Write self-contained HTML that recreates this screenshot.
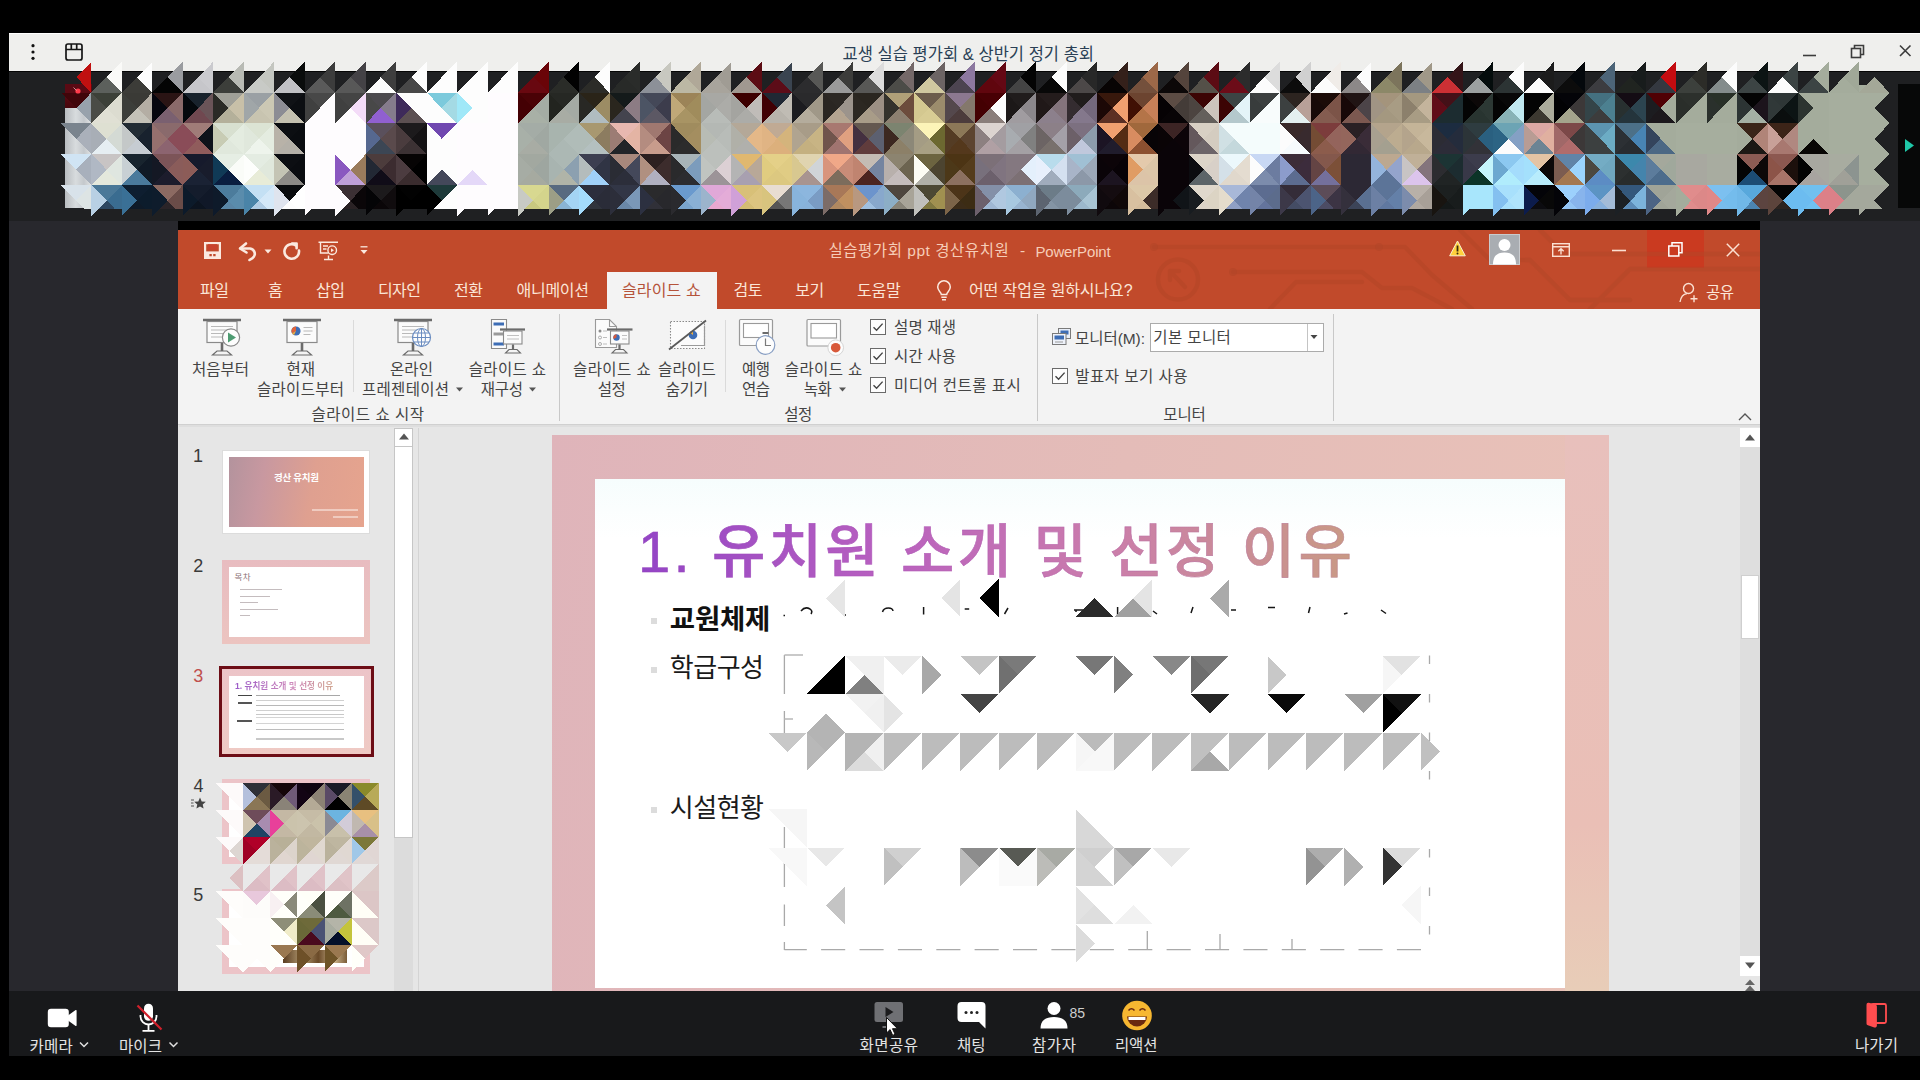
<!DOCTYPE html>
<html lang="ko"><head><meta charset="utf-8"><title>교생 실습 평가회 &amp; 상반기 정기 총회</title>
<style>
html,body{margin:0;padding:0;background:#000;}
body{width:1920px;height:1080px;position:relative;overflow:hidden;font-family:'Liberation Sans','Noto Sans CJK KR',sans-serif;}
.a{position:absolute;}
.t{position:absolute;white-space:nowrap;}
.mos{position:absolute;left:0;top:0;}
svg{position:absolute;overflow:visible;}
.cb{position:absolute;width:14px;height:14px;border:1px solid #6a6a6a;background:#fdfdfd;}
.vs{position:absolute;width:1px;background:#d2d2d2;}
</style></head><body>

<div class="a" style="left:9px;top:33px;width:1911px;height:38px;background:#efefed;border-top:1px solid #fff;box-sizing:border-box;"></div>
<div class="a" style="left:9px;top:71px;width:1911px;height:150px;background:#1f2022;border-top:1px solid #050505;box-sizing:border-box;"></div>
<div class="a" style="left:65px;top:84px;width:27px;height:24px;background:linear-gradient(180deg,#5a0a14 0,#5a0a14 40%,#46060c 100%);"></div>
<div class="a" style="left:65px;top:108px;width:27px;height:100px;background:linear-gradient(90deg,#b8bcc0,#d8dcde 40%,#c4c8cc 70%,#e4e6e6);"></div>
<div class="a" style="left:1859px;top:85px;width:13px;height:123px;background:#a6ae9e;"></div>
<div class="a" style="left:1898px;top:84px;width:22px;height:124px;background:#070808;"></div>
<div class="a" style="left:9px;top:221px;width:1911px;height:770px;background:#28282d;"></div>
<div class="a" style="left:178px;top:221px;width:1582px;height:770px;background:#000;"></div>
<div class="a" style="left:9px;top:991px;width:1911px;height:65px;background:#18191b;"></div>
<!-- powerpoint -->
<div class="a" style="left:178px;top:230px;width:1582px;height:79px;background:#c14a2b;"></div>
<div class="a" style="left:1647px;top:230px;width:57px;height:38px;background:#ca3a20;"></div>
<div class="a" style="left:607px;top:272px;width:110px;height:37px;background:#f3f3f3;"></div>
<div class="a" style="left:178px;top:309px;width:1582px;height:116px;background:#f3f3f3;border-bottom:1px solid #d0d0d0;box-sizing:border-box;"></div>
<div class="a" style="left:178px;top:425px;width:1582px;height:566px;background:#e6e6e6;"></div>
<svg style="left:1120px;top:230px;overflow:hidden" width="640" height="79" fill="none" stroke-linecap="round" stroke-linejoin="round"><g stroke="#b24527" stroke-width="4.500" opacity=".5"><path d="M34 17H285l27 28l40 34"/><path d="M113 42H242l20 16h30l40 21"/><path d="M150 79l26-27H242"/><circle cx="58" cy="49.600" r="20"/><path d="M50 41l15 16M50 41h9M50 41v9"/><path d="M340 0l30 30h40l40 40h60M470 79l40-40h130M420 0l24 24h196"/></g><g fill="#b24527" opacity=".5"><circle cx="34" cy="17" r="4"/><circle cx="113" cy="42" r="4"/><circle cx="259" cy="17" r="4"/></g></svg><div class="vs" style="left:353px;top:320px;height:72px;background:#dadada;"></div><div class="vs" style="left:559px;top:314px;height:107px;background:#c8c8c8;"></div><div class="vs" style="left:725px;top:320px;height:72px;background:#dadada;"></div><div class="vs" style="left:1037px;top:314px;height:107px;background:#c8c8c8;"></div><div class="vs" style="left:1333px;top:314px;height:107px;background:#c8c8c8;"></div><div class="cb" style="left:870px;top:319px;"></div><svg style="left:870px;top:319px" width="16" height="16"><path d="M3.5 8.2L6.6 11.3L12.6 4.6" fill="none" stroke="#444" stroke-width="1.4"/></svg><div class="cb" style="left:870px;top:348px;"></div><svg style="left:870px;top:348px" width="16" height="16"><path d="M3.5 8.2L6.6 11.3L12.6 4.6" fill="none" stroke="#444" stroke-width="1.4"/></svg><div class="cb" style="left:870px;top:377px;"></div><svg style="left:870px;top:377px" width="16" height="16"><path d="M3.5 8.2L6.6 11.3L12.6 4.6" fill="none" stroke="#444" stroke-width="1.4"/></svg><div class="cb" style="left:1052px;top:368px;"></div><svg style="left:1052px;top:368px" width="16" height="16"><path d="M3.5 8.2L6.6 11.3L12.6 4.6" fill="none" stroke="#444" stroke-width="1.4"/></svg><div class="a" style="left:1150px;top:323px;width:172px;height:27px;background:#fff;border:1px solid #ababab;"></div><div class="a" style="left:1307px;top:324px;width:1px;height:27px;background:#c4c4c4;"></div><svg style="left:1310px;top:334px" width="8" height="6"><path d="M0.5 1h7L4 5z" fill="#444"/></svg><svg style="left:456px;top:387px" width="7" height="5"><path d="M0 0.5h7L3.5 4.5z" fill="#555"/></svg><svg style="left:529px;top:387px" width="7" height="5"><path d="M0 0.5h7L3.5 4.5z" fill="#555"/></svg><svg style="left:839px;top:387px" width="7" height="5"><path d="M0 0.5h7L3.5 4.5z" fill="#555"/></svg><div class="a" style="left:394px;top:428px;width:19px;height:410px;background:#fff;border:1px solid #c6c6c6;box-sizing:border-box;"></div><div class="a" style="left:394px;top:446px;width:19px;height:1px;background:#c6c6c6;"></div><div class="a" style="left:394px;top:838px;width:19px;height:153px;background:#dcdcdc;"></div><svg style="left:399px;top:433px" width="10" height="7"><path d="M0 6.5L5 0.5L10 6.5z" fill="#555"/></svg><div class="a" style="left:418px;top:428px;width:1px;height:563px;background:#d4d4d4;"></div><div class="a" style="left:179px;top:425px;width:1581px;height:2px;background:#dedede;"></div><div class="a" style="left:1740px;top:428px;width:20px;height:548px;background:#dedede;"></div><div class="a" style="left:1740px;top:428px;width:20px;height:19px;background:#fff;"></div><div class="a" style="left:1740px;top:956px;width:20px;height:20px;background:#fff;"></div><div class="a" style="left:1741px;top:575px;width:18px;height:64px;background:#fff;border:1px solid #cfcfcf;box-sizing:border-box;"></div><svg style="left:1745px;top:434px" width="10" height="7"><path d="M0 6.5L5 0.5L10 6.5z" fill="#555"/></svg><svg style="left:1745px;top:962px" width="10" height="7"><path d="M0 0.5L5 6.5L10 0.5z" fill="#555"/></svg><svg style="left:1745px;top:979px" width="10" height="12"><path d="M0 6L5 0.5L10 6zM0 12L5 6.5L10 12z" fill="#666"/></svg><svg style="left:1738px;top:412px" width="14" height="9"><path d="M1 8L7 2L13 8" fill="none" stroke="#555" stroke-width="1.4"/></svg><div class="a" style="left:222px;top:450px;width:148px;height:84px;background:#fff;border:1px solid #dcdcdc;box-sizing:border-box;"></div><div class="a" style="left:229px;top:457px;width:135px;height:70px;background:linear-gradient(100deg,#b3939d 0%,#c898a0 25%,#dfa090 60%,#e6a48e 100%);"></div><div class="a" style="left:312px;top:509px;width:46px;height:2px;background:#f3d6cc;opacity:.8"></div><div class="a" style="left:333px;top:516px;width:25px;height:2px;background:#f3d6cc;opacity:.8"></div><div class="a" style="left:222px;top:560px;width:148px;height:84px;background:linear-gradient(180deg,#e8bcc0,#ecc4c0);"></div><div class="a" style="left:229px;top:567px;width:135px;height:70px;background:#fff;"></div><div class="a" style="left:240px;top:589px;width:42px;height:1.3px;background:#c4bcbe;"></div><div class="a" style="left:240px;top:596px;width:30px;height:1.3px;background:#c4bcbe;"></div><div class="a" style="left:240px;top:602px;width:18px;height:1.3px;background:#c4bcbe;"></div><div class="a" style="left:240px;top:609px;width:38px;height:1.3px;background:#c4bcbe;"></div><div class="a" style="left:240px;top:615px;width:10px;height:1.3px;background:#c4bcbe;"></div><div class="a" style="left:219px;top:666px;width:155px;height:91px;background:#6d0d16;"></div><div class="a" style="left:222px;top:669px;width:149px;height:85px;background:linear-gradient(180deg,#ecc4c8,#efcac4);"></div><div class="a" style="left:229px;top:676px;width:135px;height:72px;background:#fff;"></div><div class="t" style="left:235px;top:681px;font-size:8.6px;line-height:10px;font-weight:700;opacity:.85;background:linear-gradient(90deg,#8a3fc0,#c878b0 60%,#c9967f);-webkit-background-clip:text;background-clip:text;color:transparent;">1. 유치원 소개 및 선정 이유</div><div class="a" style="left:238px;top:694.7px;width:14px;height:1.6px;background:#444;"></div><div class="a" style="left:256px;top:694.8px;width:84px;height:1.4px;background:#a8a8a8;"></div><div class="a" style="left:238px;top:702.2px;width:14px;height:1.6px;background:#555;"></div><div class="a" style="left:237px;top:720.2px;width:15px;height:1.6px;background:#555;"></div><div class="a" style="left:256px;top:700.0px;width:88px;height:1px;background:#d0d0d0;"></div><div class="a" style="left:256px;top:704.9px;width:88px;height:1.2px;background:#b8b8b8;"></div><div class="a" style="left:256px;top:709.5px;width:88px;height:1px;background:#d0d0d0;"></div><div class="a" style="left:256px;top:713.5px;width:88px;height:1px;background:#c8c8c8;"></div><div class="a" style="left:256px;top:717.0px;width:88px;height:1px;background:#d4d4d4;"></div><div class="a" style="left:256px;top:722.5px;width:88px;height:1px;background:#d4d4d4;"></div><div class="a" style="left:256px;top:728.9px;width:88px;height:1.2px;background:#bdbdbd;"></div><div class="a" style="left:256px;top:738.4px;width:88px;height:1.2px;background:#c8c8c8;"></div><div class="a" style="left:222px;top:779px;width:148px;height:85px;background:#ecc4c8;"></div><div class="a" style="left:229px;top:786px;width:135px;height:71px;background:#fff;"></div><div class="a" style="left:222px;top:889px;width:148px;height:85px;background:#ecc4c8;"></div><div class="a" style="left:229px;top:896px;width:135px;height:71px;background:#fff;"></div><div class="a" style="left:283px;top:950px;width:64px;height:13px;background:linear-gradient(90deg,#5a3c20,#b09870 30%,#6a4a28 55%,#cbb48c 80%,#7a5c38);"></div><svg style="left:191px;top:797px" width="15" height="12"><path d="M9 0.5L10.7 4.4L14.8 4.8L11.7 7.5L12.6 11.6L9 9.5L5.4 11.6L6.3 7.5L3.2 4.8L7.3 4.4z" fill="#444"/><path d="M0 3h3M0 6h2.5M0 9h3" stroke="#555" stroke-width="1"/></svg><div class="a" style="left:552px;top:435px;width:1057px;height:556px;background:linear-gradient(100deg,#dfb4ba 0%,#e4bcb8 50%,#e9c2b8 100%);"></div><div class="a" style="left:1565px;top:435px;width:44px;height:556px;background:linear-gradient(180deg,#e8c0bc 0%,#eabfb6 70%,#e8cdb8 100%);"></div><div class="a" style="left:595px;top:479px;width:970px;height:509px;background:linear-gradient(180deg,#f6fdfd 0,#fff 60px);"></div><div class="t" id="s1" style="left:638px;top:523.4px;font-size:58px;line-height:58px;letter-spacing:3.2px;font-weight:500;background:linear-gradient(90deg,#9344c6 0%,#b961bf 35%,#cb7dab 65%,#c99a84 100%);-webkit-background-clip:text;background-clip:text;color:transparent;-webkit-text-stroke:0.6px rgba(150,70,170,0.25);">1. 유치원 소개 및 선정 이유</div><div class="a" style="left:651px;top:618px;width:6px;height:6px;background:#dcdcdc;"></div><div class="a" style="left:651px;top:667px;width:6px;height:6px;background:#dcdcdc;"></div><div class="a" style="left:651px;top:807px;width:6px;height:6px;background:#dcdcdc;"></div><svg style="left:0;top:0" width="1920" height="1080" fill="none" stroke="#a9a9a9" stroke-width="1.3"><path d="M784.4 949.7H806.8M821.1 949.7H845.2M859.5 949.7H883.6M897.9 949.7H922.0M936.3 949.7H960.4M974.6 949.7H998.7M1013.0 949.7H1037.1M1051.4 949.7H1075.5M1089.8 949.7H1113.9M1128.2 949.7H1152.3M1166.6 949.7H1190.7M1205.0 949.7H1229.1M1243.4 949.7H1267.5M1281.8 949.7H1305.9M1320.2 949.7H1344.3M1358.5 949.7H1382.6M1396.9 949.7H1421.0"/><path d="M1429.5 655.6v8.5M1429.5 694.0v8.5M1429.5 732.5v8.5M1429.5 771.0v8.5M1429.5 849.0v8.5M1429.5 887.5v8.5M1429.5 926.0v8.5M784.4 827V887M784.4 904.5V926M784.4 942V950M784.4 655V694M784.4 711V733M1147.3 931V949M1220 934V949M1292 939V949"/><path d="M784.4 655H803M784.4 719H793" stroke="#b8b8b8"/></svg><svg style="left:0;top:0" width="1920" height="1080" fill="none" stroke="#161616" stroke-width="1.5"><path d="M783.5 615.5h1.5M801 611q4-5 9-2q3 2 1 5M844.500 615h1.500M882.500 612q1-4 6-4q4 0 4.500 3M923.600 607v7.500M964.700 609h4.500M1008 608l-3.500 6M1074 610h10M1076 610v2M1117.600 607v10M1153 611l4 3M1193 607l-2 6M1231 610h5M1268 607.500h7M1310 607l-1.500 6M1344 614l3.500-1M1381 610l5 3.500"/></svg><svg class="mos" width="1920" height="1080" viewBox="0 0 1920 1080" shape-rendering="crispEdges"><path fill="#c01010" d="M91.4 61.7L91.4 92.6L76.2 77.1z"/>
<path fill="#fafaf8" d="M121.9 61.7L121.9 92.6L106.7 77.1z"/>
<path fill="#5c605c" d="M121.9 92.6L91.4 92.6L106.7 77.1z"/>
<path fill="#fdfdfd" d="M152.4 61.7L152.4 92.6L137.1 77.1z"/>
<path fill="#3c3c38" d="M152.4 92.6L121.9 92.6L137.1 77.1z"/>
<path fill="#9a9ca0" d="M182.9 61.7L182.9 92.6L167.6 77.1z"/>
<path fill="#040404" d="M182.9 92.6L152.4 92.6L167.6 77.1z"/>
<path fill="#cacace" d="M213.3 61.7L213.3 92.6L198.1 77.1z"/>
<path fill="#c6c6ca" d="M213.3 92.6L182.9 92.6L198.1 77.1z"/>
<path fill="#b8bab4" d="M243.8 61.7L243.8 92.6L228.6 77.1z"/>
<path fill="#3c3e3a" d="M243.8 92.6L213.3 92.6L228.6 77.1z"/>
<path fill="#c4c6c0" d="M274.3 61.7L274.3 92.6L259.0 77.1z"/>
<path fill="#c8cac6" d="M274.3 92.6L243.8 92.6L259.0 77.1z"/>
<path fill="#0a0c0c" d="M304.8 61.7L304.8 92.6L289.5 77.1z"/>
<path fill="#c0c0c4" d="M304.8 92.6L274.3 92.6L289.5 77.1z"/>
<path fill="#3c3c3c" d="M335.2 61.7L335.2 92.6L320.0 77.1z"/>
<path fill="#5a5a5a" d="M335.2 92.6L304.8 92.6L320.0 77.1z"/>
<path fill="#444246" d="M365.7 61.7L365.7 92.6L350.5 77.1z"/>
<path fill="#585858" d="M365.7 92.6L335.2 92.6L350.5 77.1z"/>
<path fill="#3e3e3e" d="M396.2 61.7L396.2 92.6L380.9 77.1z"/>
<path fill="#fcfcfc" d="M396.2 92.6L365.7 92.6L380.9 77.1z"/>
<path fill="#fdfdfd" d="M426.7 61.7L426.7 92.6L411.4 77.1z"/>
<path fill="#484848" d="M426.7 92.6L396.2 92.6L411.4 77.1z"/>
<path fill="#fdfdfd" d="M457.1 61.7L457.1 92.6L441.9 77.1z"/>
<path fill="#fdfdfd" d="M457.1 92.6L426.7 92.6L441.9 77.1z"/>
<path fill="#fdfdfd" d="M487.6 61.7L487.6 92.6L472.4 77.1z"/>
<path fill="#fdfdfd" d="M487.6 92.6L457.1 92.6L472.4 77.1z"/>
<path fill="#fdfdfd" d="M518.1 61.7L518.1 92.6L502.9 77.1z"/>
<path fill="#fdfdfd" d="M518.1 92.6L487.6 92.6L502.9 77.1z"/>
<path fill="#6a0408" d="M548.6 61.7L548.6 92.6L533.3 77.1z"/>
<path fill="#680810" d="M548.6 92.6L518.1 92.6L533.3 77.1z"/>
<path fill="#020202" d="M579.0 61.7L579.0 92.6L563.8 77.1z"/>
<path fill="#2a2c28" d="M579.0 92.6L548.6 92.6L563.8 77.1z"/>
<path fill="#fdfdfd" d="M609.5 61.7L609.5 92.6L594.3 77.1z"/>
<path fill="#2c2c28" d="M609.5 92.6L579.0 92.6L594.3 77.1z"/>
<path fill="#2a2c2a" d="M640.0 61.7L640.0 92.6L624.8 77.1z"/>
<path fill="#282a28" d="M640.0 92.6L609.5 92.6L624.8 77.1z"/>
<path fill="#c8c8c0" d="M670.5 61.7L670.5 92.6L655.2 77.1z"/>
<path fill="#8c9098" d="M670.5 92.6L640.0 92.6L655.2 77.1z"/>
<path fill="#b0a898" d="M700.9 61.7L700.9 92.6L685.7 77.1z"/>
<path fill="#bcb8a4" d="M700.9 92.6L670.5 92.6L685.7 77.1z"/>
<path fill="#a09c94" d="M731.4 61.7L731.4 92.6L716.2 77.1z"/>
<path fill="#a8a49c" d="M731.4 92.6L700.9 92.6L716.2 77.1z"/>
<path fill="#5c0c14" d="M761.9 61.7L761.9 92.6L746.7 77.1z"/>
<path fill="#a09890" d="M761.9 92.6L731.4 92.6L746.7 77.1z"/>
<path fill="#3a4450" d="M792.4 61.7L792.4 92.6L777.1 77.1z"/>
<path fill="#5c0c18" d="M792.4 92.6L761.9 92.6L777.1 77.1z"/>
<path fill="#585856" d="M822.9 61.7L822.9 92.6L807.6 77.1z"/>
<path fill="#2c2c2e" d="M822.9 92.6L792.4 92.6L807.6 77.1z"/>
<path fill="#3c3c3a" d="M853.3 61.7L853.3 92.6L838.1 77.1z"/>
<path fill="#9a9a9a" d="M853.3 92.6L822.9 92.6L838.1 77.1z"/>
<path fill="#dcdcdc" d="M883.8 61.7L883.8 92.6L868.6 77.1z"/>
<path fill="#585856" d="M883.8 92.6L853.3 92.6L868.6 77.1z"/>
<path fill="#746868" d="M914.3 61.7L914.3 92.6L899.0 77.1z"/>
<path fill="#4c4c48" d="M914.3 92.6L883.8 92.6L899.0 77.1z"/>
<path fill="#6c6464" d="M944.8 61.7L944.8 92.6L929.5 77.1z"/>
<path fill="#d0c8a0" d="M944.8 92.6L914.3 92.6L929.5 77.1z"/>
<path fill="#8c78a0" d="M975.2 61.7L975.2 92.6L960.0 77.1z"/>
<path fill="#4c4450" d="M975.2 92.6L944.8 92.6L960.0 77.1z"/>
<path fill="#640814" d="M1005.7 61.7L1005.7 92.6L990.5 77.1z"/>
<path fill="#60060e" d="M1005.7 92.6L975.2 92.6L990.5 77.1z"/>
<path fill="#040404" d="M1036.2 61.7L1036.2 92.6L1020.9 77.1z"/>
<path fill="#444444" d="M1036.2 92.6L1005.7 92.6L1020.9 77.1z"/>
<path fill="#fcfcfc" d="M1066.7 61.7L1066.7 92.6L1051.4 77.1z"/>
<path fill="#080808" d="M1066.7 92.6L1036.2 92.6L1051.4 77.1z"/>
<path fill="#282828" d="M1097.1 61.7L1097.1 92.6L1081.9 77.1z"/>
<path fill="#4c4848" d="M1097.1 92.6L1066.7 92.6L1081.9 77.1z"/>
<path fill="#34201a" d="M1127.6 61.7L1127.6 92.6L1112.4 77.1z"/>
<path fill="#080404" d="M1127.6 92.6L1097.1 92.6L1112.4 77.1z"/>
<path fill="#9c6848" d="M1158.1 61.7L1158.1 92.6L1142.9 77.1z"/>
<path fill="#74503c" d="M1158.1 92.6L1127.6 92.6L1142.9 77.1z"/>
<path fill="#54443c" d="M1188.6 61.7L1188.6 92.6L1173.3 77.1z"/>
<path fill="#0c0808" d="M1188.6 92.6L1158.1 92.6L1173.3 77.1z"/>
<path fill="#5c0c14" d="M1219.0 61.7L1219.0 92.6L1203.8 77.1z"/>
<path fill="#545048" d="M1219.0 92.6L1188.6 92.6L1203.8 77.1z"/>
<path fill="#2c2c2c" d="M1249.5 61.7L1249.5 92.6L1234.3 77.1z"/>
<path fill="#6c0c18" d="M1249.5 92.6L1219.0 92.6L1234.3 77.1z"/>
<path fill="#dcdcdc" d="M1280.0 61.7L1280.0 92.6L1264.8 77.1z"/>
<path fill="#fcfcfc" d="M1280.0 92.6L1249.5 92.6L1264.8 77.1z"/>
<path fill="#d0d0d0" d="M1310.5 61.7L1310.5 92.6L1295.2 77.1z"/>
<path fill="#0c0c0c" d="M1310.5 92.6L1280.0 92.6L1295.2 77.1z"/>
<path fill="#f0ece8" d="M1340.9 61.7L1340.9 92.6L1325.7 77.1z"/>
<path fill="#fcfcfc" d="M1340.9 92.6L1310.5 92.6L1325.7 77.1z"/>
<path fill="#fcfcfc" d="M1371.4 61.7L1371.4 92.6L1356.2 77.1z"/>
<path fill="#8c8888" d="M1371.4 92.6L1340.9 92.6L1356.2 77.1z"/>
<path fill="#7c745c" d="M1401.9 61.7L1401.9 92.6L1386.7 77.1z"/>
<path fill="#8c8868" d="M1401.9 92.6L1371.4 92.6L1386.7 77.1z"/>
<path fill="#a09888" d="M1432.4 61.7L1432.4 92.6L1417.1 77.1z"/>
<path fill="#7c8084" d="M1432.4 92.6L1401.9 92.6L1417.1 77.1z"/>
<path fill="#341418" d="M1462.8 61.7L1462.8 92.6L1447.6 77.1z"/>
<path fill="#cc3034" d="M1462.8 92.6L1432.4 92.6L1447.6 77.1z"/>
<path fill="#040c0c" d="M1493.3 61.7L1493.3 92.6L1478.1 77.1z"/>
<path fill="#9ca0a0" d="M1493.3 92.6L1462.8 92.6L1478.1 77.1z"/>
<path fill="#fcfcfc" d="M1523.8 61.7L1523.8 92.6L1508.6 77.1z"/>
<path fill="#2c3434" d="M1523.8 92.6L1493.3 92.6L1508.6 77.1z"/>
<path fill="#1c1c1c" d="M1554.3 61.7L1554.3 92.6L1539.0 77.1z"/>
<path fill="#fcfcfc" d="M1554.3 92.6L1523.8 92.6L1539.0 77.1z"/>
<path fill="#04080c" d="M1584.8 61.7L1584.8 92.6L1569.5 77.1z"/>
<path fill="#0c0c0c" d="M1584.8 92.6L1554.3 92.6L1569.5 77.1z"/>
<path fill="#4c6478" d="M1615.2 61.7L1615.2 92.6L1600.0 77.1z"/>
<path fill="#3c3c40" d="M1615.2 92.6L1584.8 92.6L1600.0 77.1z"/>
<path fill="#181c1c" d="M1645.7 61.7L1645.7 92.6L1630.5 77.1z"/>
<path fill="#202420" d="M1645.7 92.6L1615.2 92.6L1630.5 77.1z"/>
<path fill="#c40c10" d="M1676.2 61.7L1676.2 92.6L1660.9 77.1z"/>
<path fill="#343840" d="M1676.2 92.6L1645.7 92.6L1660.9 77.1z"/>
<path fill="#2c2c28" d="M1706.7 61.7L1706.7 92.6L1691.4 77.1z"/>
<path fill="#3c403c" d="M1706.7 92.6L1676.2 92.6L1691.4 77.1z"/>
<path fill="#fcfcfc" d="M1737.1 61.7L1737.1 92.6L1721.9 77.1z"/>
<path fill="#848c8c" d="M1737.1 92.6L1706.7 92.6L1721.9 77.1z"/>
<path fill="#0c1414" d="M1767.6 61.7L1767.6 92.6L1752.4 77.1z"/>
<path fill="#3c4444" d="M1767.6 92.6L1737.1 92.6L1752.4 77.1z"/>
<path fill="#3c4444" d="M1798.1 61.7L1798.1 92.6L1782.8 77.1z"/>
<path fill="#fcfcfc" d="M1798.1 92.6L1767.6 92.6L1782.8 77.1z"/>
<path fill="#a4ac9c" d="M1828.6 61.7L1828.6 92.6L1813.3 77.1z"/>
<path fill="#3c4444" d="M1828.6 92.6L1798.1 92.6L1813.3 77.1z"/>
<path fill="#a0a898" d="M1859.0 61.7L1859.0 92.6L1843.8 77.1z"/>
<path fill="#a4ac9c" d="M1859.0 92.6L1828.6 92.6L1843.8 77.1z"/>
<path fill="#a4a898" d="M1889.5 92.6L1859.0 92.6L1874.3 77.1z"/>
<path fill="#40050a" d="M61.0 92.6L91.4 92.6L76.2 108.0z"/>
<path fill="#98a2ac" d="M91.4 92.6L91.4 123.4L76.2 108.0z"/>
<path fill="#3c4038" d="M91.4 92.6L121.9 92.6L106.7 108.0z"/>
<path fill="#dcdcd0" d="M121.9 92.6L121.9 123.4L106.7 108.0z"/>
<path fill="#e0e0d4" d="M121.9 123.4L91.4 123.4L106.7 108.0z"/>
<path fill="#4a4c46" d="M91.4 123.4L91.4 92.6L106.7 108.0z"/>
<path fill="#3a3a36" d="M121.9 92.6L152.4 92.6L137.1 108.0z"/>
<path fill="#b4aea4" d="M152.4 92.6L152.4 123.4L137.1 108.0z"/>
<path fill="#c4c2b8" d="M152.4 123.4L121.9 123.4L137.1 108.0z"/>
<path fill="#3c3e3a" d="M121.9 123.4L121.9 92.6L137.1 108.0z"/>
<path fill="#2a1414" d="M152.4 92.6L182.9 92.6L167.6 108.0z"/>
<path fill="#8a6a6a" d="M182.9 92.6L182.9 123.4L167.6 108.0z"/>
<path fill="#7a6070" d="M182.9 123.4L152.4 123.4L167.6 108.0z"/>
<path fill="#06060e" d="M152.4 123.4L152.4 92.6L167.6 108.0z"/>
<path fill="#18222c" d="M182.9 92.6L213.3 92.6L198.1 108.0z"/>
<path fill="#6a5458" d="M213.3 92.6L213.3 123.4L198.1 108.0z"/>
<path fill="#704850" d="M213.3 123.4L182.9 123.4L198.1 108.0z"/>
<path fill="#04080c" d="M182.9 123.4L182.9 92.6L198.1 108.0z"/>
<path fill="#a0a098" d="M213.3 92.6L243.8 92.6L228.6 108.0z"/>
<path fill="#c8c0a8" d="M243.8 92.6L243.8 123.4L228.6 108.0z"/>
<path fill="#b4b09a" d="M243.8 123.4L213.3 123.4L228.6 108.0z"/>
<path fill="#2a2a26" d="M213.3 123.4L213.3 92.6L228.6 108.0z"/>
<path fill="#9aa0a4" d="M243.8 92.6L274.3 92.6L259.0 108.0z"/>
<path fill="#ccc8b4" d="M274.3 92.6L274.3 123.4L259.0 108.0z"/>
<path fill="#c8c4b0" d="M274.3 123.4L243.8 123.4L259.0 108.0z"/>
<path fill="#a0a6a8" d="M243.8 123.4L243.8 92.6L259.0 108.0z"/>
<path fill="#101216" d="M274.3 92.6L304.8 92.6L289.5 108.0z"/>
<path fill="#0c0e12" d="M304.8 92.6L304.8 123.4L289.5 108.0z"/>
<path fill="#c4c0b0" d="M304.8 123.4L274.3 123.4L289.5 108.0z"/>
<path fill="#8c8c94" d="M274.3 123.4L274.3 92.6L289.5 108.0z"/>
<path fill="#484848" d="M304.8 92.6L335.2 92.6L320.0 108.0z"/>
<path fill="#fefcfe" d="M335.2 92.6L335.2 123.4L320.0 108.0z"/>
<path fill="#fefcfe" d="M335.2 123.4L304.8 123.4L320.0 108.0z"/>
<path fill="#404040" d="M304.8 123.4L304.8 92.6L320.0 108.0z"/>
<path fill="#444444" d="M335.2 92.6L365.7 92.6L350.5 108.0z"/>
<path fill="#f4dcf8" d="M365.7 92.6L365.7 123.4L350.5 108.0z"/>
<path fill="#fefcfe" d="M365.7 123.4L335.2 123.4L350.5 108.0z"/>
<path fill="#404040" d="M335.2 123.4L335.2 92.6L350.5 108.0z"/>
<path fill="#4c4a4e" d="M365.7 92.6L396.2 92.6L380.9 108.0z"/>
<path fill="#857c8c" d="M396.2 92.6L396.2 123.4L380.9 108.0z"/>
<path fill="#9060d0" d="M396.2 123.4L365.7 123.4L380.9 108.0z"/>
<path fill="#484848" d="M365.7 123.4L365.7 92.6L380.9 108.0z"/>
<path fill="#fdfdfd" d="M396.2 92.6L426.7 92.6L411.4 108.0z"/>
<path fill="#fdfdfd" d="M426.7 92.6L426.7 123.4L411.4 108.0z"/>
<path fill="#5c5052" d="M426.7 123.4L396.2 123.4L411.4 108.0z"/>
<path fill="#3e2a5a" d="M396.2 123.4L396.2 92.6L411.4 108.0z"/>
<path fill="#7ccadc" d="M426.7 92.6L457.1 92.6L441.9 108.0z"/>
<path fill="#a4dae4" d="M457.1 92.6L457.1 123.4L441.9 108.0z"/>
<path fill="#fdfdfd" d="M457.1 123.4L426.7 123.4L441.9 108.0z"/>
<path fill="#fdfdfd" d="M426.7 123.4L426.7 92.6L441.9 108.0z"/>
<path fill="#fdfdfd" d="M457.1 92.6L487.6 92.6L472.4 108.0z"/>
<path fill="#fdfdfd" d="M487.6 92.6L487.6 123.4L472.4 108.0z"/>
<path fill="#fdfdfd" d="M487.6 123.4L457.1 123.4L472.4 108.0z"/>
<path fill="#a0e8f8" d="M457.1 123.4L457.1 92.6L472.4 108.0z"/>
<path fill="#fefcfe" d="M487.6 92.6L518.1 92.6L502.9 108.0z"/>
<path fill="#fefcfe" d="M518.1 92.6L518.1 123.4L502.9 108.0z"/>
<path fill="#fefcfe" d="M518.1 123.4L487.6 123.4L502.9 108.0z"/>
<path fill="#fefcfe" d="M487.6 123.4L487.6 92.6L502.9 108.0z"/>
<path fill="#4a0206" d="M518.1 92.6L548.6 92.6L533.3 108.0z"/>
<path fill="#a4aca4" d="M548.6 92.6L548.6 123.4L533.3 108.0z"/>
<path fill="#a8b0a6" d="M548.6 123.4L518.1 123.4L533.3 108.0z"/>
<path fill="#440004" d="M518.1 123.4L518.1 92.6L533.3 108.0z"/>
<path fill="#262824" d="M548.6 92.6L579.0 92.6L563.8 108.0z"/>
<path fill="#a4aaa4" d="M579.0 92.6L579.0 123.4L563.8 108.0z"/>
<path fill="#a8aca4" d="M579.0 123.4L548.6 123.4L563.8 108.0z"/>
<path fill="#22241f" d="M548.6 123.4L548.6 92.6L563.8 108.0z"/>
<path fill="#2a2418" d="M579.0 92.6L609.5 92.6L594.3 108.0z"/>
<path fill="#9c8c64" d="M609.5 92.6L609.5 123.4L594.3 108.0z"/>
<path fill="#b0bcc0" d="M609.5 123.4L579.0 123.4L594.3 108.0z"/>
<path fill="#282824" d="M579.0 123.4L579.0 92.6L594.3 108.0z"/>
<path fill="#141a1a" d="M609.5 92.6L640.0 92.6L624.8 108.0z"/>
<path fill="#8c7c84" d="M640.0 92.6L640.0 123.4L624.8 108.0z"/>
<path fill="#44444e" d="M640.0 123.4L609.5 123.4L624.8 108.0z"/>
<path fill="#2a261e" d="M609.5 123.4L609.5 92.6L624.8 108.0z"/>
<path fill="#444858" d="M640.0 92.6L670.5 92.6L655.2 108.0z"/>
<path fill="#3c3c4c" d="M670.5 92.6L670.5 123.4L655.2 108.0z"/>
<path fill="#5c5864" d="M670.5 123.4L640.0 123.4L655.2 108.0z"/>
<path fill="#4c5464" d="M640.0 123.4L640.0 92.6L655.2 108.0z"/>
<path fill="#9c8458" d="M670.5 92.6L700.9 92.6L685.7 108.0z"/>
<path fill="#a08c5c" d="M700.9 92.6L700.9 123.4L685.7 108.0z"/>
<path fill="#a89464" d="M700.9 123.4L670.5 123.4L685.7 108.0z"/>
<path fill="#c0a878" d="M670.5 123.4L670.5 92.6L685.7 108.0z"/>
<path fill="#a8a8a4" d="M700.9 92.6L731.4 92.6L716.2 108.0z"/>
<path fill="#acaca8" d="M731.4 92.6L731.4 123.4L716.2 108.0z"/>
<path fill="#b8bcb8" d="M731.4 123.4L700.9 123.4L716.2 108.0z"/>
<path fill="#a4a6a2" d="M700.9 123.4L700.9 92.6L716.2 108.0z"/>
<path fill="#3c0000" d="M731.4 92.6L761.9 92.6L746.7 108.0z"/>
<path fill="#c0bcb8" d="M761.9 92.6L761.9 123.4L746.7 108.0z"/>
<path fill="#acaca8" d="M761.9 123.4L731.4 123.4L746.7 108.0z"/>
<path fill="#a4a4a0" d="M731.4 123.4L731.4 92.6L746.7 108.0z"/>
<path fill="#202834" d="M761.9 92.6L792.4 92.6L777.1 108.0z"/>
<path fill="#c0bcb4" d="M792.4 92.6L792.4 123.4L777.1 108.0z"/>
<path fill="#b8b4ac" d="M792.4 123.4L761.9 123.4L777.1 108.0z"/>
<path fill="#400004" d="M761.9 123.4L761.9 92.6L777.1 108.0z"/>
<path fill="#2a2a2c" d="M792.4 92.6L822.9 92.6L807.6 108.0z"/>
<path fill="#a09888" d="M822.9 92.6L822.9 123.4L807.6 108.0z"/>
<path fill="#b4ac9c" d="M822.9 123.4L792.4 123.4L807.6 108.0z"/>
<path fill="#1c1c20" d="M792.4 123.4L792.4 92.6L807.6 108.0z"/>
<path fill="#2c2824" d="M822.9 92.6L853.3 92.6L838.1 108.0z"/>
<path fill="#9c948c" d="M853.3 92.6L853.3 123.4L838.1 108.0z"/>
<path fill="#b4a490" d="M853.3 123.4L822.9 123.4L838.1 108.0z"/>
<path fill="#2a2622" d="M822.9 123.4L822.9 92.6L838.1 108.0z"/>
<path fill="#2a2620" d="M853.3 92.6L883.8 92.6L868.6 108.0z"/>
<path fill="#9c9084" d="M883.8 92.6L883.8 123.4L868.6 108.0z"/>
<path fill="#a89c88" d="M883.8 123.4L853.3 123.4L868.6 108.0z"/>
<path fill="#2c2822" d="M853.3 123.4L853.3 92.6L868.6 108.0z"/>
<path fill="#b0a078" d="M883.8 92.6L914.3 92.6L899.0 108.0z"/>
<path fill="#6c4c3c" d="M914.3 92.6L914.3 123.4L899.0 108.0z"/>
<path fill="#8c8070" d="M914.3 123.4L883.8 123.4L899.0 108.0z"/>
<path fill="#34322c" d="M883.8 123.4L883.8 92.6L899.0 108.0z"/>
<path fill="#6c5c4c" d="M914.3 92.6L944.8 92.6L929.5 108.0z"/>
<path fill="#9c8c6c" d="M944.8 92.6L944.8 123.4L929.5 108.0z"/>
<path fill="#d8cc94" d="M944.8 123.4L914.3 123.4L929.5 108.0z"/>
<path fill="#d4c890" d="M914.3 123.4L914.3 92.6L929.5 108.0z"/>
<path fill="#8c7890" d="M944.8 92.6L975.2 92.6L960.0 108.0z"/>
<path fill="#84786c" d="M975.2 92.6L975.2 123.4L960.0 108.0z"/>
<path fill="#4c3c3c" d="M975.2 123.4L944.8 123.4L960.0 108.0z"/>
<path fill="#54484c" d="M944.8 123.4L944.8 92.6L960.0 108.0z"/>
<path fill="#480004" d="M975.2 92.6L1005.7 92.6L990.5 108.0z"/>
<path fill="#fcfcfc" d="M1005.7 92.6L1005.7 123.4L990.5 108.0z"/>
<path fill="#8a7e7a" d="M1005.7 123.4L975.2 123.4L990.5 108.0z"/>
<path fill="#440002" d="M975.2 123.4L975.2 92.6L990.5 108.0z"/>
<path fill="#201c1c" d="M1005.7 92.6L1036.2 92.6L1020.9 108.0z"/>
<path fill="#8c888c" d="M1036.2 92.6L1036.2 123.4L1020.9 108.0z"/>
<path fill="#a09ca0" d="M1036.2 123.4L1005.7 123.4L1020.9 108.0z"/>
<path fill="#1c1818" d="M1005.7 123.4L1005.7 92.6L1020.9 108.0z"/>
<path fill="#241c1c" d="M1036.2 92.6L1066.7 92.6L1051.4 108.0z"/>
<path fill="#84747c" d="M1066.7 92.6L1066.7 123.4L1051.4 108.0z"/>
<path fill="#8c808c" d="M1066.7 123.4L1036.2 123.4L1051.4 108.0z"/>
<path fill="#201818" d="M1036.2 123.4L1036.2 92.6L1051.4 108.0z"/>
<path fill="#201c1c" d="M1066.7 92.6L1097.1 92.6L1081.9 108.0z"/>
<path fill="#74687c" d="M1097.1 92.6L1097.1 123.4L1081.9 108.0z"/>
<path fill="#84788c" d="M1097.1 123.4L1066.7 123.4L1081.9 108.0z"/>
<path fill="#342c30" d="M1066.7 123.4L1066.7 92.6L1081.9 108.0z"/>
<path fill="#38180c" d="M1097.1 92.6L1127.6 92.6L1112.4 108.0z"/>
<path fill="#f0a070" d="M1127.6 92.6L1127.6 123.4L1112.4 108.0z"/>
<path fill="#5c3024" d="M1127.6 123.4L1097.1 123.4L1112.4 108.0z"/>
<path fill="#1c0806" d="M1097.1 123.4L1097.1 92.6L1112.4 108.0z"/>
<path fill="#6c4430" d="M1127.6 92.6L1158.1 92.6L1142.9 108.0z"/>
<path fill="#c88058" d="M1158.1 92.6L1158.1 123.4L1142.9 108.0z"/>
<path fill="#b47448" d="M1158.1 123.4L1127.6 123.4L1142.9 108.0z"/>
<path fill="#401004" d="M1127.6 123.4L1127.6 92.6L1142.9 108.0z"/>
<path fill="#5c4c44" d="M1158.1 92.6L1188.6 92.6L1173.3 108.0z"/>
<path fill="#443c38" d="M1188.6 92.6L1188.6 123.4L1173.3 108.0z"/>
<path fill="#080406" d="M1188.6 123.4L1158.1 123.4L1173.3 108.0z"/>
<path fill="#060204" d="M1158.1 123.4L1158.1 92.6L1173.3 108.0z"/>
<path fill="#3c0404" d="M1188.6 92.6L1219.0 92.6L1203.8 108.0z"/>
<path fill="#ccc4bc" d="M1219.0 92.6L1219.0 123.4L1203.8 108.0z"/>
<path fill="#64605c" d="M1219.0 123.4L1188.6 123.4L1203.8 108.0z"/>
<path fill="#4c4440" d="M1188.6 123.4L1188.6 92.6L1203.8 108.0z"/>
<path fill="#3c4444" d="M1219.0 92.6L1249.5 92.6L1234.3 108.0z"/>
<path fill="#e4f4f8" d="M1249.5 92.6L1249.5 123.4L1234.3 108.0z"/>
<path fill="#b4c8cc" d="M1249.5 123.4L1219.0 123.4L1234.3 108.0z"/>
<path fill="#3c0404" d="M1219.0 123.4L1219.0 92.6L1234.3 108.0z"/>
<path fill="#3c4040" d="M1249.5 92.6L1280.0 92.6L1264.8 108.0z"/>
<path fill="#f8fcfc" d="M1280.0 92.6L1280.0 123.4L1264.8 108.0z"/>
<path fill="#f8fcfc" d="M1280.0 123.4L1249.5 123.4L1264.8 108.0z"/>
<path fill="#383c3c" d="M1249.5 123.4L1249.5 92.6L1264.8 108.0z"/>
<path fill="#2c2420" d="M1280.0 92.6L1310.5 92.6L1295.2 108.0z"/>
<path fill="#b8a098" d="M1310.5 92.6L1310.5 123.4L1295.2 108.0z"/>
<path fill="#e4f0f0" d="M1310.5 123.4L1280.0 123.4L1295.2 108.0z"/>
<path fill="#3c4040" d="M1280.0 123.4L1280.0 92.6L1295.2 108.0z"/>
<path fill="#1c0c08" d="M1310.5 92.6L1340.9 92.6L1325.7 108.0z"/>
<path fill="#7c5448" d="M1340.9 92.6L1340.9 123.4L1325.7 108.0z"/>
<path fill="#845c50" d="M1340.9 123.4L1310.5 123.4L1325.7 108.0z"/>
<path fill="#180a08" d="M1310.5 123.4L1310.5 92.6L1325.7 108.0z"/>
<path fill="#201414" d="M1340.9 92.6L1371.4 92.6L1356.2 108.0z"/>
<path fill="#4c4448" d="M1371.4 92.6L1371.4 123.4L1356.2 108.0z"/>
<path fill="#7c5850" d="M1371.4 123.4L1340.9 123.4L1356.2 108.0z"/>
<path fill="#180808" d="M1340.9 123.4L1340.9 92.6L1356.2 108.0z"/>
<path fill="#a4947c" d="M1371.4 92.6L1401.9 92.6L1386.7 108.0z"/>
<path fill="#a89c84" d="M1401.9 92.6L1401.9 123.4L1386.7 108.0z"/>
<path fill="#a49880" d="M1401.9 123.4L1371.4 123.4L1386.7 108.0z"/>
<path fill="#a09484" d="M1371.4 123.4L1371.4 92.6L1386.7 108.0z"/>
<path fill="#a49880" d="M1401.9 92.6L1432.4 92.6L1417.1 108.0z"/>
<path fill="#c4b49c" d="M1432.4 92.6L1432.4 123.4L1417.1 108.0z"/>
<path fill="#a89c84" d="M1432.4 123.4L1401.9 123.4L1417.1 108.0z"/>
<path fill="#8c806c" d="M1401.9 123.4L1401.9 92.6L1417.1 108.0z"/>
<path fill="#441018" d="M1432.4 92.6L1462.8 92.6L1447.6 108.0z"/>
<path fill="#1c2c30" d="M1462.8 92.6L1462.8 123.4L1447.6 108.0z"/>
<path fill="#1c2c30" d="M1462.8 123.4L1432.4 123.4L1447.6 108.0z"/>
<path fill="#600c18" d="M1432.4 123.4L1432.4 92.6L1447.6 108.0z"/>
<path fill="#0c0808" d="M1462.8 92.6L1493.3 92.6L1478.1 108.0z"/>
<path fill="#2c3834" d="M1493.3 92.6L1493.3 123.4L1478.1 108.0z"/>
<path fill="#283430" d="M1493.3 123.4L1462.8 123.4L1478.1 108.0z"/>
<path fill="#040404" d="M1462.8 123.4L1462.8 92.6L1478.1 108.0z"/>
<path fill="#080808" d="M1493.3 92.6L1523.8 92.6L1508.6 108.0z"/>
<path fill="#c0e8f0" d="M1523.8 92.6L1523.8 123.4L1508.6 108.0z"/>
<path fill="#88b2b6" d="M1523.8 123.4L1493.3 123.4L1508.6 108.0z"/>
<path fill="#040404" d="M1493.3 123.4L1493.3 92.6L1508.6 108.0z"/>
<path fill="#040404" d="M1523.8 92.6L1554.3 92.6L1539.0 108.0z"/>
<path fill="#acac9c" d="M1554.3 92.6L1554.3 123.4L1539.0 108.0z"/>
<path fill="#3c3830" d="M1554.3 123.4L1523.8 123.4L1539.0 108.0z"/>
<path fill="#040404" d="M1523.8 123.4L1523.8 92.6L1539.0 108.0z"/>
<path fill="#040408" d="M1554.3 92.6L1584.8 92.6L1569.5 108.0z"/>
<path fill="#3c3838" d="M1584.8 92.6L1584.8 123.4L1569.5 108.0z"/>
<path fill="#a4a48c" d="M1584.8 123.4L1554.3 123.4L1569.5 108.0z"/>
<path fill="#020204" d="M1554.3 123.4L1554.3 92.6L1569.5 108.0z"/>
<path fill="#447080" d="M1584.8 92.6L1615.2 92.6L1600.0 108.0z"/>
<path fill="#4c8090" d="M1615.2 92.6L1615.2 123.4L1600.0 108.0z"/>
<path fill="#3c3c3c" d="M1615.2 123.4L1584.8 123.4L1600.0 108.0z"/>
<path fill="#344448" d="M1584.8 123.4L1584.8 92.6L1600.0 108.0z"/>
<path fill="#140c14" d="M1615.2 92.6L1645.7 92.6L1630.5 108.0z"/>
<path fill="#2c4450" d="M1645.7 92.6L1645.7 123.4L1630.5 108.0z"/>
<path fill="#24343c" d="M1645.7 123.4L1615.2 123.4L1630.5 108.0z"/>
<path fill="#283030" d="M1615.2 123.4L1615.2 92.6L1630.5 108.0z"/>
<path fill="#500004" d="M1645.7 92.6L1676.2 92.6L1660.9 108.0z"/>
<path fill="#a4ac9c" d="M1676.2 92.6L1676.2 123.4L1660.9 108.0z"/>
<path fill="#1c181c" d="M1676.2 123.4L1645.7 123.4L1660.9 108.0z"/>
<path fill="#1c1c20" d="M1645.7 123.4L1645.7 92.6L1660.9 108.0z"/>
<path fill="#2c302c" d="M1676.2 92.6L1706.7 92.6L1691.4 108.0z"/>
<path fill="#a4ac9c" d="M1706.7 92.6L1706.7 123.4L1691.4 108.0z"/>
<path fill="#a4ac9c" d="M1706.7 123.4L1676.2 123.4L1691.4 108.0z"/>
<path fill="#2a2e2a" d="M1676.2 123.4L1676.2 92.6L1691.4 108.0z"/>
<path fill="#283028" d="M1706.7 92.6L1737.1 92.6L1721.9 108.0z"/>
<path fill="#a4ac9c" d="M1737.1 92.6L1737.1 123.4L1721.9 108.0z"/>
<path fill="#a4ac9c" d="M1737.1 123.4L1706.7 123.4L1721.9 108.0z"/>
<path fill="#2a302c" d="M1706.7 123.4L1706.7 92.6L1721.9 108.0z"/>
<path fill="#040404" d="M1737.1 92.6L1767.6 92.6L1752.4 108.0z"/>
<path fill="#1c141c" d="M1767.6 92.6L1767.6 123.4L1752.4 108.0z"/>
<path fill="#a4b0a4" d="M1767.6 123.4L1737.1 123.4L1752.4 108.0z"/>
<path fill="#2c3434" d="M1737.1 123.4L1737.1 92.6L1752.4 108.0z"/>
<path fill="#2e3636" d="M1767.6 92.6L1798.1 92.6L1782.8 108.0z"/>
<path fill="#0c1414" d="M1798.1 92.6L1798.1 123.4L1782.8 108.0z"/>
<path fill="#0a0e0e" d="M1798.1 123.4L1767.6 123.4L1782.8 108.0z"/>
<path fill="#303838" d="M1767.6 123.4L1767.6 92.6L1782.8 108.0z"/>
<path fill="#a4ac9c" d="M1798.1 92.6L1828.6 92.6L1813.3 108.0z"/>
<path fill="#a4ac9c" d="M1828.6 92.6L1828.6 123.4L1813.3 108.0z"/>
<path fill="#a4ac9c" d="M1828.6 123.4L1798.1 123.4L1813.3 108.0z"/>
<path fill="#2c3430" d="M1798.1 123.4L1798.1 92.6L1813.3 108.0z"/>
<path fill="#a6ae9e" d="M1828.6 92.6L1859.0 92.6L1843.8 108.0z"/>
<path fill="#a6ae9e" d="M1859.0 92.6L1859.0 123.4L1843.8 108.0z"/>
<path fill="#a6ae9e" d="M1859.0 123.4L1828.6 123.4L1843.8 108.0z"/>
<path fill="#a6ae9e" d="M1828.6 123.4L1828.6 92.6L1843.8 108.0z"/>
<path fill="#a6ae9e" d="M1859.0 92.6L1889.5 92.6L1874.3 108.0z"/>
<path fill="#a6ae9e" d="M1889.5 123.4L1859.0 123.4L1874.3 108.0z"/>
<path fill="#a6ae9e" d="M1859.0 123.4L1859.0 92.6L1874.3 108.0z"/>
<path fill="#7a848e" d="M61.0 123.4L91.4 123.4L76.2 138.9z"/>
<path fill="#aab0ba" d="M91.4 123.4L91.4 154.3L76.2 138.9z"/>
<path fill="#dee0d2" d="M91.4 123.4L121.9 123.4L106.7 138.9z"/>
<path fill="#d4dad4" d="M121.9 123.4L121.9 154.3L106.7 138.9z"/>
<path fill="#e6eef2" d="M121.9 154.3L91.4 154.3L106.7 138.9z"/>
<path fill="#a8aeb6" d="M91.4 154.3L91.4 123.4L106.7 138.9z"/>
<path fill="#222c34" d="M121.9 123.4L152.4 123.4L137.1 138.9z"/>
<path fill="#18222e" d="M152.4 123.4L152.4 154.3L137.1 138.9z"/>
<path fill="#c6ccd2" d="M152.4 154.3L121.9 154.3L137.1 138.9z"/>
<path fill="#c4c8c8" d="M121.9 154.3L121.9 123.4L137.1 138.9z"/>
<path fill="#8a6a6c" d="M152.4 123.4L182.9 123.4L167.6 138.9z"/>
<path fill="#8a4c58" d="M182.9 123.4L182.9 154.3L167.6 138.9z"/>
<path fill="#8c6470" d="M182.9 154.3L152.4 154.3L167.6 138.9z"/>
<path fill="#96706e" d="M152.4 154.3L152.4 123.4L167.6 138.9z"/>
<path fill="#a07c78" d="M182.9 123.4L213.3 123.4L198.1 138.9z"/>
<path fill="#0e121a" d="M213.3 123.4L213.3 154.3L198.1 138.9z"/>
<path fill="#905c5c" d="M213.3 154.3L182.9 154.3L198.1 138.9z"/>
<path fill="#8a4c58" d="M182.9 154.3L182.9 123.4L198.1 138.9z"/>
<path fill="#d8e0d0" d="M213.3 123.4L243.8 123.4L228.6 138.9z"/>
<path fill="#e4ece0" d="M243.8 123.4L243.8 154.3L228.6 138.9z"/>
<path fill="#e0e8dc" d="M243.8 154.3L213.3 154.3L228.6 138.9z"/>
<path fill="#c8ccb4" d="M213.3 154.3L213.3 123.4L228.6 138.9z"/>
<path fill="#dce4d4" d="M243.8 123.4L274.3 123.4L259.0 138.9z"/>
<path fill="#e4ece0" d="M274.3 123.4L274.3 154.3L259.0 138.9z"/>
<path fill="#eef4ec" d="M274.3 154.3L243.8 154.3L259.0 138.9z"/>
<path fill="#e0e8dc" d="M243.8 154.3L243.8 123.4L259.0 138.9z"/>
<path fill="#0c0e12" d="M274.3 123.4L304.8 123.4L289.5 138.9z"/>
<path fill="#0a0c10" d="M304.8 123.4L304.8 154.3L289.5 138.9z"/>
<path fill="#b4b0a8" d="M304.8 154.3L274.3 154.3L289.5 138.9z"/>
<path fill="#b8b2a8" d="M274.3 154.3L274.3 123.4L289.5 138.9z"/>
<path fill="#fefcfe" d="M304.8 123.4L335.2 123.4L320.0 138.9z"/>
<path fill="#fefcfe" d="M335.2 123.4L335.2 154.3L320.0 138.9z"/>
<path fill="#fefcfe" d="M335.2 154.3L304.8 154.3L320.0 138.9z"/>
<path fill="#fefcfe" d="M304.8 154.3L304.8 123.4L320.0 138.9z"/>
<path fill="#fefcfe" d="M335.2 123.4L365.7 123.4L350.5 138.9z"/>
<path fill="#fefcfe" d="M365.7 123.4L365.7 154.3L350.5 138.9z"/>
<path fill="#fefcfe" d="M365.7 154.3L335.2 154.3L350.5 138.9z"/>
<path fill="#fefcfe" d="M335.2 154.3L335.2 123.4L350.5 138.9z"/>
<path fill="#5a505c" d="M365.7 123.4L396.2 123.4L380.9 138.9z"/>
<path fill="#5a4a4c" d="M396.2 123.4L396.2 154.3L380.9 138.9z"/>
<path fill="#3c4654" d="M396.2 154.3L365.7 154.3L380.9 138.9z"/>
<path fill="#566890" d="M365.7 154.3L365.7 123.4L380.9 138.9z"/>
<path fill="#1c1a1c" d="M396.2 123.4L426.7 123.4L411.4 138.9z"/>
<path fill="#141214" d="M426.7 123.4L426.7 154.3L411.4 138.9z"/>
<path fill="#3c3234" d="M426.7 154.3L396.2 154.3L411.4 138.9z"/>
<path fill="#4a3c3e" d="M396.2 154.3L396.2 123.4L411.4 138.9z"/>
<path fill="#7048b0" d="M426.7 123.4L457.1 123.4L441.9 138.9z"/>
<path fill="#fdfdfd" d="M457.1 123.4L457.1 154.3L441.9 138.9z"/>
<path fill="#fdfdfd" d="M457.1 154.3L426.7 154.3L441.9 138.9z"/>
<path fill="#fdfdfd" d="M426.7 154.3L426.7 123.4L441.9 138.9z"/>
<path fill="#fefcfe" d="M457.1 123.4L487.6 123.4L472.4 138.9z"/>
<path fill="#fefcfe" d="M487.6 123.4L487.6 154.3L472.4 138.9z"/>
<path fill="#fefcfe" d="M487.6 154.3L457.1 154.3L472.4 138.9z"/>
<path fill="#fefcfe" d="M457.1 154.3L457.1 123.4L472.4 138.9z"/>
<path fill="#fefcfe" d="M487.6 123.4L518.1 123.4L502.9 138.9z"/>
<path fill="#fefcfe" d="M518.1 123.4L518.1 154.3L502.9 138.9z"/>
<path fill="#fefcfe" d="M518.1 154.3L487.6 154.3L502.9 138.9z"/>
<path fill="#fefcfe" d="M487.6 154.3L487.6 123.4L502.9 138.9z"/>
<path fill="#a4aca6" d="M518.1 123.4L548.6 123.4L533.3 138.9z"/>
<path fill="#a0a8a2" d="M548.6 123.4L548.6 154.3L533.3 138.9z"/>
<path fill="#a8aca4" d="M548.6 154.3L518.1 154.3L533.3 138.9z"/>
<path fill="#a8b0a8" d="M518.1 154.3L518.1 123.4L533.3 138.9z"/>
<path fill="#a8b4ae" d="M548.6 123.4L579.0 123.4L563.8 138.9z"/>
<path fill="#b0bcb8" d="M579.0 123.4L579.0 154.3L563.8 138.9z"/>
<path fill="#acb8b4" d="M579.0 154.3L548.6 154.3L563.8 138.9z"/>
<path fill="#a8b4ae" d="M548.6 154.3L548.6 123.4L563.8 138.9z"/>
<path fill="#a89870" d="M579.0 123.4L609.5 123.4L594.3 138.9z"/>
<path fill="#8c7c60" d="M609.5 123.4L609.5 154.3L594.3 138.9z"/>
<path fill="#b4c0c0" d="M609.5 154.3L579.0 154.3L594.3 138.9z"/>
<path fill="#b0bcb8" d="M579.0 154.3L579.0 123.4L594.3 138.9z"/>
<path fill="#e8b8b0" d="M609.5 123.4L640.0 123.4L624.8 138.9z"/>
<path fill="#e4b4a4" d="M640.0 123.4L640.0 154.3L624.8 138.9z"/>
<path fill="#222428" d="M640.0 154.3L609.5 154.3L624.8 138.9z"/>
<path fill="#9c7c74" d="M609.5 154.3L609.5 123.4L624.8 138.9z"/>
<path fill="#a07870" d="M640.0 123.4L670.5 123.4L655.2 138.9z"/>
<path fill="#6c4444" d="M670.5 123.4L670.5 154.3L655.2 138.9z"/>
<path fill="#c89c8c" d="M670.5 154.3L640.0 154.3L655.2 138.9z"/>
<path fill="#b48c80" d="M640.0 154.3L640.0 123.4L655.2 138.9z"/>
<path fill="#a08c5e" d="M670.5 123.4L700.9 123.4L685.7 138.9z"/>
<path fill="#a48e60" d="M700.9 123.4L700.9 154.3L685.7 138.9z"/>
<path fill="#2c2c2c" d="M700.9 154.3L670.5 154.3L685.7 138.9z"/>
<path fill="#2a2a2a" d="M670.5 154.3L670.5 123.4L685.7 138.9z"/>
<path fill="#b4b8b4" d="M700.9 123.4L731.4 123.4L716.2 138.9z"/>
<path fill="#b8bcb8" d="M731.4 123.4L731.4 154.3L716.2 138.9z"/>
<path fill="#bcc0bc" d="M731.4 154.3L700.9 154.3L716.2 138.9z"/>
<path fill="#b8bcb4" d="M700.9 154.3L700.9 123.4L716.2 138.9z"/>
<path fill="#b4a898" d="M731.4 123.4L761.9 123.4L746.7 138.9z"/>
<path fill="#e4b888" d="M761.9 123.4L761.9 154.3L746.7 138.9z"/>
<path fill="#b0b0ac" d="M761.9 154.3L731.4 154.3L746.7 138.9z"/>
<path fill="#b0b0a8" d="M731.4 154.3L731.4 123.4L746.7 138.9z"/>
<path fill="#c0aa94" d="M761.9 123.4L792.4 123.4L777.1 138.9z"/>
<path fill="#d4b47c" d="M792.4 123.4L792.4 154.3L777.1 138.9z"/>
<path fill="#dcb07c" d="M792.4 154.3L761.9 154.3L777.1 138.9z"/>
<path fill="#e0b484" d="M761.9 154.3L761.9 123.4L777.1 138.9z"/>
<path fill="#a89c88" d="M792.4 123.4L822.9 123.4L807.6 138.9z"/>
<path fill="#c8b484" d="M822.9 123.4L822.9 154.3L807.6 138.9z"/>
<path fill="#c4b080" d="M822.9 154.3L792.4 154.3L807.6 138.9z"/>
<path fill="#b0a490" d="M792.4 154.3L792.4 123.4L807.6 138.9z"/>
<path fill="#a87870" d="M822.9 123.4L853.3 123.4L838.1 138.9z"/>
<path fill="#e0a080" d="M853.3 123.4L853.3 154.3L838.1 138.9z"/>
<path fill="#a07470" d="M853.3 154.3L822.9 154.3L838.1 138.9z"/>
<path fill="#70544c" d="M822.9 154.3L822.9 123.4L838.1 138.9z"/>
<path fill="#645850" d="M853.3 123.4L883.8 123.4L868.6 138.9z"/>
<path fill="#5c6070" d="M883.8 123.4L883.8 154.3L868.6 138.9z"/>
<path fill="#603c3c" d="M883.8 154.3L853.3 154.3L868.6 138.9z"/>
<path fill="#443040" d="M853.3 154.3L853.3 123.4L868.6 138.9z"/>
<path fill="#7c8470" d="M883.8 123.4L914.3 123.4L899.0 138.9z"/>
<path fill="#8c8878" d="M914.3 123.4L914.3 154.3L899.0 138.9z"/>
<path fill="#8c8068" d="M914.3 154.3L883.8 154.3L899.0 138.9z"/>
<path fill="#3c2820" d="M883.8 154.3L883.8 123.4L899.0 138.9z"/>
<path fill="#fcf4b8" d="M914.3 123.4L944.8 123.4L929.5 138.9z"/>
<path fill="#6c6830" d="M944.8 123.4L944.8 154.3L929.5 138.9z"/>
<path fill="#a8a084" d="M944.8 154.3L914.3 154.3L929.5 138.9z"/>
<path fill="#a49c84" d="M914.3 154.3L914.3 123.4L929.5 138.9z"/>
<path fill="#8c7858" d="M944.8 123.4L975.2 123.4L960.0 138.9z"/>
<path fill="#5c4430" d="M975.2 123.4L975.2 154.3L960.0 138.9z"/>
<path fill="#54381c" d="M975.2 154.3L944.8 154.3L960.0 138.9z"/>
<path fill="#543c24" d="M944.8 154.3L944.8 123.4L960.0 138.9z"/>
<path fill="#dcd4d0" d="M975.2 123.4L1005.7 123.4L990.5 138.9z"/>
<path fill="#a49ca0" d="M1005.7 123.4L1005.7 154.3L990.5 138.9z"/>
<path fill="#b0a0a4" d="M1005.7 154.3L975.2 154.3L990.5 138.9z"/>
<path fill="#8c8080" d="M975.2 154.3L975.2 123.4L990.5 138.9z"/>
<path fill="#a0a0a4" d="M1005.7 123.4L1036.2 123.4L1020.9 138.9z"/>
<path fill="#808080" d="M1036.2 123.4L1036.2 154.3L1020.9 138.9z"/>
<path fill="#a4a0a4" d="M1036.2 154.3L1005.7 154.3L1020.9 138.9z"/>
<path fill="#a8acb0" d="M1005.7 154.3L1005.7 123.4L1020.9 138.9z"/>
<path fill="#8c8088" d="M1036.2 123.4L1066.7 123.4L1051.4 138.9z"/>
<path fill="#a4a0a8" d="M1066.7 123.4L1066.7 154.3L1051.4 138.9z"/>
<path fill="#78706c" d="M1066.7 154.3L1036.2 154.3L1051.4 138.9z"/>
<path fill="#6c6464" d="M1036.2 154.3L1036.2 123.4L1051.4 138.9z"/>
<path fill="#7c7080" d="M1066.7 123.4L1097.1 123.4L1081.9 138.9z"/>
<path fill="#8c9cac" d="M1097.1 123.4L1097.1 154.3L1081.9 138.9z"/>
<path fill="#c0c8dc" d="M1097.1 154.3L1066.7 154.3L1081.9 138.9z"/>
<path fill="#6c6068" d="M1066.7 154.3L1066.7 123.4L1081.9 138.9z"/>
<path fill="#f0a070" d="M1097.1 123.4L1127.6 123.4L1112.4 138.9z"/>
<path fill="#542c14" d="M1127.6 123.4L1127.6 154.3L1112.4 138.9z"/>
<path fill="#201c2c" d="M1127.6 154.3L1097.1 154.3L1112.4 138.9z"/>
<path fill="#1c1424" d="M1097.1 154.3L1097.1 123.4L1112.4 138.9z"/>
<path fill="#a0683c" d="M1127.6 123.4L1158.1 123.4L1142.9 138.9z"/>
<path fill="#080406" d="M1158.1 123.4L1158.1 154.3L1142.9 138.9z"/>
<path fill="#8c5030" d="M1158.1 154.3L1127.6 154.3L1142.9 138.9z"/>
<path fill="#d88c60" d="M1127.6 154.3L1127.6 123.4L1142.9 138.9z"/>
<path fill="#3c2424" d="M1158.1 123.4L1188.6 123.4L1173.3 138.9z"/>
<path fill="#0c0408" d="M1188.6 123.4L1188.6 154.3L1173.3 138.9z"/>
<path fill="#0a0408" d="M1188.6 154.3L1158.1 154.3L1173.3 138.9z"/>
<path fill="#0a0406" d="M1158.1 154.3L1158.1 123.4L1173.3 138.9z"/>
<path fill="#d8d0c4" d="M1188.6 123.4L1219.0 123.4L1203.8 138.9z"/>
<path fill="#d4ccc0" d="M1219.0 123.4L1219.0 154.3L1203.8 138.9z"/>
<path fill="#6c6468" d="M1219.0 154.3L1188.6 154.3L1203.8 138.9z"/>
<path fill="#64585c" d="M1188.6 154.3L1188.6 123.4L1203.8 138.9z"/>
<path fill="#f4fcfc" d="M1219.0 123.4L1249.5 123.4L1234.3 138.9z"/>
<path fill="#f4fcfc" d="M1249.5 123.4L1249.5 154.3L1234.3 138.9z"/>
<path fill="#c4d8dc" d="M1249.5 154.3L1219.0 154.3L1234.3 138.9z"/>
<path fill="#d0e0e4" d="M1219.0 154.3L1219.0 123.4L1234.3 138.9z"/>
<path fill="#f4fcfc" d="M1249.5 123.4L1280.0 123.4L1264.8 138.9z"/>
<path fill="#f4fcfc" d="M1280.0 123.4L1280.0 154.3L1264.8 138.9z"/>
<path fill="#f4fcfc" d="M1280.0 154.3L1249.5 154.3L1264.8 138.9z"/>
<path fill="#f4fcfc" d="M1249.5 154.3L1249.5 123.4L1264.8 138.9z"/>
<path fill="#3a2a2a" d="M1280.0 123.4L1310.5 123.4L1295.2 138.9z"/>
<path fill="#382a2e" d="M1310.5 123.4L1310.5 154.3L1295.2 138.9z"/>
<path fill="#f6fafc" d="M1310.5 154.3L1280.0 154.3L1295.2 138.9z"/>
<path fill="#fcfcfc" d="M1280.0 154.3L1280.0 123.4L1295.2 138.9z"/>
<path fill="#7c3c3c" d="M1310.5 123.4L1340.9 123.4L1325.7 138.9z"/>
<path fill="#94645c" d="M1340.9 123.4L1340.9 154.3L1325.7 138.9z"/>
<path fill="#8c5c4c" d="M1340.9 154.3L1310.5 154.3L1325.7 138.9z"/>
<path fill="#744c34" d="M1310.5 154.3L1310.5 123.4L1325.7 138.9z"/>
<path fill="#2a2024" d="M1340.9 123.4L1371.4 123.4L1356.2 138.9z"/>
<path fill="#3a2c38" d="M1371.4 123.4L1371.4 154.3L1356.2 138.9z"/>
<path fill="#322834" d="M1371.4 154.3L1340.9 154.3L1356.2 138.9z"/>
<path fill="#94665c" d="M1340.9 154.3L1340.9 123.4L1356.2 138.9z"/>
<path fill="#b4a48c" d="M1371.4 123.4L1401.9 123.4L1386.7 138.9z"/>
<path fill="#bcac90" d="M1401.9 123.4L1401.9 154.3L1386.7 138.9z"/>
<path fill="#a4a090" d="M1401.9 154.3L1371.4 154.3L1386.7 138.9z"/>
<path fill="#a8a090" d="M1371.4 154.3L1371.4 123.4L1386.7 138.9z"/>
<path fill="#c4b498" d="M1401.9 123.4L1432.4 123.4L1417.1 138.9z"/>
<path fill="#c8b89c" d="M1432.4 123.4L1432.4 154.3L1417.1 138.9z"/>
<path fill="#b8a88c" d="M1432.4 154.3L1401.9 154.3L1417.1 138.9z"/>
<path fill="#b4a48c" d="M1401.9 154.3L1401.9 123.4L1417.1 138.9z"/>
<path fill="#1c2c40" d="M1432.4 123.4L1462.8 123.4L1447.6 138.9z"/>
<path fill="#242c3c" d="M1462.8 123.4L1462.8 154.3L1447.6 138.9z"/>
<path fill="#2c2c38" d="M1462.8 154.3L1432.4 154.3L1447.6 138.9z"/>
<path fill="#2c2c34" d="M1432.4 154.3L1432.4 123.4L1447.6 138.9z"/>
<path fill="#2e3c40" d="M1462.8 123.4L1493.3 123.4L1478.1 138.9z"/>
<path fill="#2a6080" d="M1493.3 123.4L1493.3 154.3L1478.1 138.9z"/>
<path fill="#323238" d="M1493.3 154.3L1462.8 154.3L1478.1 138.9z"/>
<path fill="#2c3438" d="M1462.8 154.3L1462.8 123.4L1478.1 138.9z"/>
<path fill="#6ca4b4" d="M1493.3 123.4L1523.8 123.4L1508.6 138.9z"/>
<path fill="#84a0c4" d="M1523.8 123.4L1523.8 154.3L1508.6 138.9z"/>
<path fill="#fcfcfc" d="M1523.8 154.3L1493.3 154.3L1508.6 138.9z"/>
<path fill="#2c6484" d="M1493.3 154.3L1493.3 123.4L1508.6 138.9z"/>
<path fill="#dca8a4" d="M1523.8 123.4L1554.3 123.4L1539.0 138.9z"/>
<path fill="#e0b0a0" d="M1554.3 123.4L1554.3 154.3L1539.0 138.9z"/>
<path fill="#6c8494" d="M1554.3 154.3L1523.8 154.3L1539.0 138.9z"/>
<path fill="#b89c94" d="M1523.8 154.3L1523.8 123.4L1539.0 138.9z"/>
<path fill="#7c4848" d="M1554.3 123.4L1584.8 123.4L1569.5 138.9z"/>
<path fill="#3c3838" d="M1584.8 123.4L1584.8 154.3L1569.5 138.9z"/>
<path fill="#b06c6c" d="M1584.8 154.3L1554.3 154.3L1569.5 138.9z"/>
<path fill="#a06868" d="M1554.3 154.3L1554.3 123.4L1569.5 138.9z"/>
<path fill="#5c94b0" d="M1584.8 123.4L1615.2 123.4L1600.0 138.9z"/>
<path fill="#6cacc4" d="M1615.2 123.4L1615.2 154.3L1600.0 138.9z"/>
<path fill="#3c4040" d="M1615.2 154.3L1584.8 154.3L1600.0 138.9z"/>
<path fill="#3c4040" d="M1584.8 154.3L1584.8 123.4L1600.0 138.9z"/>
<path fill="#4c7088" d="M1615.2 123.4L1645.7 123.4L1630.5 138.9z"/>
<path fill="#4884b4" d="M1645.7 123.4L1645.7 154.3L1630.5 138.9z"/>
<path fill="#282c30" d="M1645.7 154.3L1615.2 154.3L1630.5 138.9z"/>
<path fill="#2c3034" d="M1615.2 154.3L1615.2 123.4L1630.5 138.9z"/>
<path fill="#a4ac9c" d="M1645.7 123.4L1676.2 123.4L1660.9 138.9z"/>
<path fill="#a4ac9c" d="M1676.2 123.4L1676.2 154.3L1660.9 138.9z"/>
<path fill="#4c6884" d="M1676.2 154.3L1645.7 154.3L1660.9 138.9z"/>
<path fill="#34445c" d="M1645.7 154.3L1645.7 123.4L1660.9 138.9z"/>
<path fill="#a6ae9e" d="M1676.2 123.4L1706.7 123.4L1691.4 138.9z"/>
<path fill="#a6ae9e" d="M1706.7 123.4L1706.7 154.3L1691.4 138.9z"/>
<path fill="#a6ae9e" d="M1706.7 154.3L1676.2 154.3L1691.4 138.9z"/>
<path fill="#a6ae9e" d="M1676.2 154.3L1676.2 123.4L1691.4 138.9z"/>
<path fill="#a6ae9e" d="M1706.7 123.4L1737.1 123.4L1721.9 138.9z"/>
<path fill="#a6ae9e" d="M1737.1 123.4L1737.1 154.3L1721.9 138.9z"/>
<path fill="#a6ae9e" d="M1737.1 154.3L1706.7 154.3L1721.9 138.9z"/>
<path fill="#a6ae9e" d="M1706.7 154.3L1706.7 123.4L1721.9 138.9z"/>
<path fill="#3a2418" d="M1737.1 123.4L1767.6 123.4L1752.4 138.9z"/>
<path fill="#b08478" d="M1767.6 123.4L1767.6 154.3L1752.4 138.9z"/>
<path fill="#1c1814" d="M1767.6 154.3L1737.1 154.3L1752.4 138.9z"/>
<path fill="#a4ac9c" d="M1737.1 154.3L1737.1 123.4L1752.4 138.9z"/>
<path fill="#3c2418" d="M1767.6 123.4L1798.1 123.4L1782.8 138.9z"/>
<path fill="#b08880" d="M1798.1 123.4L1798.1 154.3L1782.8 138.9z"/>
<path fill="#a87870" d="M1798.1 154.3L1767.6 154.3L1782.8 138.9z"/>
<path fill="#c8a098" d="M1767.6 154.3L1767.6 123.4L1782.8 138.9z"/>
<path fill="#a4ac9c" d="M1798.1 123.4L1828.6 123.4L1813.3 138.9z"/>
<path fill="#a4ac9c" d="M1828.6 123.4L1828.6 154.3L1813.3 138.9z"/>
<path fill="#080604" d="M1828.6 154.3L1798.1 154.3L1813.3 138.9z"/>
<path fill="#a4ac9c" d="M1798.1 154.3L1798.1 123.4L1813.3 138.9z"/>
<path fill="#a6ae9e" d="M1828.6 123.4L1859.0 123.4L1843.8 138.9z"/>
<path fill="#a6ae9e" d="M1859.0 123.4L1859.0 154.3L1843.8 138.9z"/>
<path fill="#a6ae9e" d="M1859.0 154.3L1828.6 154.3L1843.8 138.9z"/>
<path fill="#a6ae9e" d="M1828.6 154.3L1828.6 123.4L1843.8 138.9z"/>
<path fill="#a6ae9e" d="M1859.0 123.4L1889.5 123.4L1874.3 138.9z"/>
<path fill="#a6ae9e" d="M1889.5 154.3L1859.0 154.3L1874.3 138.9z"/>
<path fill="#a6ae9e" d="M1859.0 154.3L1859.0 123.4L1874.3 138.9z"/>
<path fill="#d0e4f4" d="M61.0 154.3L91.4 154.3L76.2 169.7z"/>
<path fill="#a8b0bc" d="M91.4 154.3L91.4 185.1L76.2 169.7z"/>
<path fill="#c8c4c4" d="M91.4 154.3L121.9 154.3L106.7 169.7z"/>
<path fill="#dfe6e0" d="M121.9 154.3L121.9 185.1L106.7 169.7z"/>
<path fill="#e4e8dc" d="M121.9 185.1L91.4 185.1L106.7 169.7z"/>
<path fill="#b0b8c4" d="M91.4 185.1L91.4 154.3L106.7 169.7z"/>
<path fill="#18242e" d="M121.9 154.3L152.4 154.3L137.1 169.7z"/>
<path fill="#101a26" d="M152.4 154.3L152.4 185.1L137.1 169.7z"/>
<path fill="#4a7a9c" d="M152.4 185.1L121.9 185.1L137.1 169.7z"/>
<path fill="#c8d0d4" d="M121.9 185.1L121.9 154.3L137.1 169.7z"/>
<path fill="#7c5458" d="M152.4 154.3L182.9 154.3L167.6 169.7z"/>
<path fill="#8a5c5a" d="M182.9 154.3L182.9 185.1L167.6 169.7z"/>
<path fill="#1c1c2c" d="M182.9 185.1L152.4 185.1L167.6 169.7z"/>
<path fill="#141824" d="M152.4 185.1L152.4 154.3L167.6 169.7z"/>
<path fill="#161a2c" d="M182.9 154.3L213.3 154.3L198.1 169.7z"/>
<path fill="#181c2c" d="M213.3 154.3L213.3 185.1L198.1 169.7z"/>
<path fill="#1a2234" d="M213.3 185.1L182.9 185.1L198.1 169.7z"/>
<path fill="#8c5c58" d="M182.9 185.1L182.9 154.3L198.1 169.7z"/>
<path fill="#e6eee4" d="M213.3 154.3L243.8 154.3L228.6 169.7z"/>
<path fill="#fafcf8" d="M243.8 154.3L243.8 185.1L228.6 169.7z"/>
<path fill="#0a1e40" d="M243.8 185.1L213.3 185.1L228.6 169.7z"/>
<path fill="#103a56" d="M213.3 185.1L213.3 154.3L228.6 169.7z"/>
<path fill="#e4ece2" d="M243.8 154.3L274.3 154.3L259.0 169.7z"/>
<path fill="#e0e8dc" d="M274.3 154.3L274.3 185.1L259.0 169.7z"/>
<path fill="#e8ecd8" d="M274.3 185.1L243.8 185.1L259.0 169.7z"/>
<path fill="#fdfefc" d="M243.8 185.1L243.8 154.3L259.0 169.7z"/>
<path fill="#0c0e12" d="M274.3 154.3L304.8 154.3L289.5 169.7z"/>
<path fill="#0a0c10" d="M304.8 154.3L304.8 185.1L289.5 169.7z"/>
<path fill="#8c8a86" d="M304.8 185.1L274.3 185.1L289.5 169.7z"/>
<path fill="#c4c4b4" d="M274.3 185.1L274.3 154.3L289.5 169.7z"/>
<path fill="#fefcfe" d="M304.8 154.3L335.2 154.3L320.0 169.7z"/>
<path fill="#fefcfe" d="M335.2 154.3L335.2 185.1L320.0 169.7z"/>
<path fill="#fefcfe" d="M335.2 185.1L304.8 185.1L320.0 169.7z"/>
<path fill="#fefcfe" d="M304.8 185.1L304.8 154.3L320.0 169.7z"/>
<path fill="#fefcfe" d="M335.2 154.3L365.7 154.3L350.5 169.7z"/>
<path fill="#9a7c5c" d="M365.7 154.3L365.7 185.1L350.5 169.7z"/>
<path fill="#c0a0d8" d="M365.7 185.1L335.2 185.1L350.5 169.7z"/>
<path fill="#8a58c0" d="M335.2 185.1L335.2 154.3L350.5 169.7z"/>
<path fill="#4c3c3c" d="M365.7 154.3L396.2 154.3L380.9 169.7z"/>
<path fill="#3c2c30" d="M396.2 154.3L396.2 185.1L380.9 169.7z"/>
<path fill="#100c18" d="M396.2 185.1L365.7 185.1L380.9 169.7z"/>
<path fill="#222834" d="M365.7 185.1L365.7 154.3L380.9 169.7z"/>
<path fill="#060404" d="M396.2 154.3L426.7 154.3L411.4 169.7z"/>
<path fill="#000000" d="M426.7 154.3L426.7 185.1L411.4 169.7z"/>
<path fill="#3a2c2e" d="M426.7 185.1L396.2 185.1L411.4 169.7z"/>
<path fill="#4c3c40" d="M396.2 185.1L396.2 154.3L411.4 169.7z"/>
<path fill="#fdfdfd" d="M426.7 154.3L457.1 154.3L441.9 169.7z"/>
<path fill="#fdfdfd" d="M457.1 154.3L457.1 185.1L441.9 169.7z"/>
<path fill="#44485a" d="M457.1 185.1L426.7 185.1L441.9 169.7z"/>
<path fill="#fdfdfd" d="M426.7 185.1L426.7 154.3L441.9 169.7z"/>
<path fill="#fefcfe" d="M457.1 154.3L487.6 154.3L472.4 169.7z"/>
<path fill="#fefcfe" d="M487.6 154.3L487.6 185.1L472.4 169.7z"/>
<path fill="#e4d8f8" d="M487.6 185.1L457.1 185.1L472.4 169.7z"/>
<path fill="#fefcfe" d="M457.1 185.1L457.1 154.3L472.4 169.7z"/>
<path fill="#fefcfe" d="M487.6 154.3L518.1 154.3L502.9 169.7z"/>
<path fill="#fefcfe" d="M518.1 154.3L518.1 185.1L502.9 169.7z"/>
<path fill="#fefcfe" d="M518.1 185.1L487.6 185.1L502.9 169.7z"/>
<path fill="#fefcfe" d="M487.6 185.1L487.6 154.3L502.9 169.7z"/>
<path fill="#a2a8a0" d="M518.1 154.3L548.6 154.3L533.3 169.7z"/>
<path fill="#9ea6a0" d="M548.6 154.3L548.6 185.1L533.3 169.7z"/>
<path fill="#a6aaa0" d="M548.6 185.1L518.1 185.1L533.3 169.7z"/>
<path fill="#a6aca4" d="M518.1 185.1L518.1 154.3L533.3 169.7z"/>
<path fill="#acb8b4" d="M548.6 154.3L579.0 154.3L563.8 169.7z"/>
<path fill="#8ca0b0" d="M579.0 154.3L579.0 185.1L563.8 169.7z"/>
<path fill="#b0b4a8" d="M579.0 185.1L548.6 185.1L563.8 169.7z"/>
<path fill="#a8b4b0" d="M548.6 185.1L548.6 154.3L563.8 169.7z"/>
<path fill="#3c3e50" d="M579.0 154.3L609.5 154.3L594.3 169.7z"/>
<path fill="#303444" d="M609.5 154.3L609.5 185.1L594.3 169.7z"/>
<path fill="#a0d0f8" d="M609.5 185.1L579.0 185.1L594.3 169.7z"/>
<path fill="#b4bcbc" d="M579.0 185.1L579.0 154.3L594.3 169.7z"/>
<path fill="#a8887c" d="M609.5 154.3L640.0 154.3L624.8 169.7z"/>
<path fill="#44485a" d="M640.0 154.3L640.0 185.1L624.8 169.7z"/>
<path fill="#2c2e3a" d="M640.0 185.1L609.5 185.1L624.8 169.7z"/>
<path fill="#2a2c34" d="M609.5 185.1L609.5 154.3L624.8 169.7z"/>
<path fill="#2c2020" d="M640.0 154.3L670.5 154.3L655.2 169.7z"/>
<path fill="#3c2c2c" d="M670.5 154.3L670.5 185.1L655.2 169.7z"/>
<path fill="#b0b0c0" d="M670.5 185.1L640.0 185.1L655.2 169.7z"/>
<path fill="#b09080" d="M640.0 185.1L640.0 154.3L655.2 169.7z"/>
<path fill="#a8b4b8" d="M670.5 154.3L700.9 154.3L685.7 169.7z"/>
<path fill="#7c9cbc" d="M700.9 154.3L700.9 185.1L685.7 169.7z"/>
<path fill="#2c2c30" d="M700.9 185.1L670.5 185.1L685.7 169.7z"/>
<path fill="#2a2a2c" d="M670.5 185.1L670.5 154.3L685.7 169.7z"/>
<path fill="#bcc0bc" d="M700.9 154.3L731.4 154.3L716.2 169.7z"/>
<path fill="#dcd0d4" d="M731.4 154.3L731.4 185.1L716.2 169.7z"/>
<path fill="#9c9498" d="M731.4 185.1L700.9 185.1L716.2 169.7z"/>
<path fill="#c0c4c0" d="M700.9 185.1L700.9 154.3L716.2 169.7z"/>
<path fill="#e0b870" d="M731.4 154.3L761.9 154.3L746.7 169.7z"/>
<path fill="#b8a898" d="M761.9 154.3L761.9 185.1L746.7 169.7z"/>
<path fill="#a8a0b0" d="M761.9 185.1L731.4 185.1L746.7 169.7z"/>
<path fill="#b4b4b4" d="M731.4 185.1L731.4 154.3L746.7 169.7z"/>
<path fill="#e4d088" d="M761.9 154.3L792.4 154.3L777.1 169.7z"/>
<path fill="#e0cc84" d="M792.4 154.3L792.4 185.1L777.1 169.7z"/>
<path fill="#dcc880" d="M792.4 185.1L761.9 185.1L777.1 169.7z"/>
<path fill="#e0cc80" d="M761.9 185.1L761.9 154.3L777.1 169.7z"/>
<path fill="#e0d4b0" d="M792.4 154.3L822.9 154.3L807.6 169.7z"/>
<path fill="#d0d4d8" d="M822.9 154.3L822.9 185.1L807.6 169.7z"/>
<path fill="#a89490" d="M822.9 185.1L792.4 185.1L807.6 169.7z"/>
<path fill="#d8c890" d="M792.4 185.1L792.4 154.3L807.6 169.7z"/>
<path fill="#f0a888" d="M822.9 154.3L853.3 154.3L838.1 169.7z"/>
<path fill="#c88c78" d="M853.3 154.3L853.3 185.1L838.1 169.7z"/>
<path fill="#7c6c5c" d="M853.3 185.1L822.9 185.1L838.1 169.7z"/>
<path fill="#d8947c" d="M822.9 185.1L822.9 154.3L838.1 169.7z"/>
<path fill="#c4bcb4" d="M853.3 154.3L883.8 154.3L868.6 169.7z"/>
<path fill="#7484a0" d="M883.8 154.3L883.8 185.1L868.6 169.7z"/>
<path fill="#4c2420" d="M883.8 185.1L853.3 185.1L868.6 169.7z"/>
<path fill="#c08470" d="M853.3 185.1L853.3 154.3L868.6 169.7z"/>
<path fill="#8c8470" d="M883.8 154.3L914.3 154.3L899.0 169.7z"/>
<path fill="#6c6450" d="M914.3 154.3L914.3 185.1L899.0 169.7z"/>
<path fill="#c4bcbc" d="M914.3 185.1L883.8 185.1L899.0 169.7z"/>
<path fill="#b8b0ac" d="M883.8 185.1L883.8 154.3L899.0 169.7z"/>
<path fill="#6c6440" d="M914.3 154.3L944.8 154.3L929.5 169.7z"/>
<path fill="#4c4430" d="M944.8 154.3L944.8 185.1L929.5 169.7z"/>
<path fill="#b0b0a8" d="M944.8 185.1L914.3 185.1L929.5 169.7z"/>
<path fill="#fcfcf4" d="M914.3 185.1L914.3 154.3L929.5 169.7z"/>
<path fill="#4c3414" d="M944.8 154.3L975.2 154.3L960.0 169.7z"/>
<path fill="#543c1c" d="M975.2 154.3L975.2 185.1L960.0 169.7z"/>
<path fill="#8c7060" d="M975.2 185.1L944.8 185.1L960.0 169.7z"/>
<path fill="#4c3818" d="M944.8 185.1L944.8 154.3L960.0 169.7z"/>
<path fill="#7c7078" d="M975.2 154.3L1005.7 154.3L990.5 169.7z"/>
<path fill="#807480" d="M1005.7 154.3L1005.7 185.1L990.5 169.7z"/>
<path fill="#6c606c" d="M1005.7 185.1L975.2 185.1L990.5 169.7z"/>
<path fill="#78707c" d="M975.2 185.1L975.2 154.3L990.5 169.7z"/>
<path fill="#847880" d="M1005.7 154.3L1036.2 154.3L1020.9 169.7z"/>
<path fill="#e4f0fc" d="M1036.2 154.3L1036.2 185.1L1020.9 169.7z"/>
<path fill="#7c7074" d="M1036.2 185.1L1005.7 185.1L1020.9 169.7z"/>
<path fill="#847880" d="M1005.7 185.1L1005.7 154.3L1020.9 169.7z"/>
<path fill="#b8dcec" d="M1036.2 154.3L1066.7 154.3L1051.4 169.7z"/>
<path fill="#d4e0f0" d="M1066.7 154.3L1066.7 185.1L1051.4 169.7z"/>
<path fill="#a0acbc" d="M1066.7 185.1L1036.2 185.1L1051.4 169.7z"/>
<path fill="#e8f0fc" d="M1036.2 185.1L1036.2 154.3L1051.4 169.7z"/>
<path fill="#a0c0d4" d="M1066.7 154.3L1097.1 154.3L1081.9 169.7z"/>
<path fill="#9ca8b8" d="M1097.1 154.3L1097.1 185.1L1081.9 169.7z"/>
<path fill="#8c98a8" d="M1097.1 185.1L1066.7 185.1L1081.9 169.7z"/>
<path fill="#a8b4c8" d="M1066.7 185.1L1066.7 154.3L1081.9 169.7z"/>
<path fill="#0c0408" d="M1097.1 154.3L1127.6 154.3L1112.4 169.7z"/>
<path fill="#080206" d="M1127.6 154.3L1127.6 185.1L1112.4 169.7z"/>
<path fill="#1c1420" d="M1127.6 185.1L1097.1 185.1L1112.4 169.7z"/>
<path fill="#0a0408" d="M1097.1 185.1L1097.1 154.3L1112.4 169.7z"/>
<path fill="#e4caac" d="M1127.6 154.3L1158.1 154.3L1142.9 169.7z"/>
<path fill="#dcc6a8" d="M1158.1 154.3L1158.1 185.1L1142.9 169.7z"/>
<path fill="#dcc4a8" d="M1158.1 185.1L1127.6 185.1L1142.9 169.7z"/>
<path fill="#e09c64" d="M1127.6 185.1L1127.6 154.3L1142.9 169.7z"/>
<path fill="#0a0408" d="M1158.1 154.3L1188.6 154.3L1173.3 169.7z"/>
<path fill="#0a0408" d="M1188.6 154.3L1188.6 185.1L1173.3 169.7z"/>
<path fill="#0a0408" d="M1188.6 185.1L1158.1 185.1L1173.3 169.7z"/>
<path fill="#0a0408" d="M1158.1 185.1L1158.1 154.3L1173.3 169.7z"/>
<path fill="#dcd4c8" d="M1188.6 154.3L1219.0 154.3L1203.8 169.7z"/>
<path fill="#d8d0c8" d="M1219.0 154.3L1219.0 185.1L1203.8 169.7z"/>
<path fill="#5c6468" d="M1219.0 185.1L1188.6 185.1L1203.8 169.7z"/>
<path fill="#0c0c10" d="M1188.6 185.1L1188.6 154.3L1203.8 169.7z"/>
<path fill="#ecf8fc" d="M1219.0 154.3L1249.5 154.3L1234.3 169.7z"/>
<path fill="#e4dcd0" d="M1249.5 154.3L1249.5 185.1L1234.3 169.7z"/>
<path fill="#e0d8cc" d="M1249.5 185.1L1219.0 185.1L1234.3 169.7z"/>
<path fill="#d4e0e8" d="M1219.0 185.1L1219.0 154.3L1234.3 169.7z"/>
<path fill="#c8d8f4" d="M1249.5 154.3L1280.0 154.3L1264.8 169.7z"/>
<path fill="#6c7ca0" d="M1280.0 154.3L1280.0 185.1L1264.8 169.7z"/>
<path fill="#7c8cac" d="M1280.0 185.1L1249.5 185.1L1264.8 169.7z"/>
<path fill="#fcfcfc" d="M1249.5 185.1L1249.5 154.3L1264.8 169.7z"/>
<path fill="#3c2c38" d="M1280.0 154.3L1310.5 154.3L1295.2 169.7z"/>
<path fill="#3c2c3c" d="M1310.5 154.3L1310.5 185.1L1295.2 169.7z"/>
<path fill="#5c6c90" d="M1310.5 185.1L1280.0 185.1L1295.2 169.7z"/>
<path fill="#8c9ccc" d="M1280.0 185.1L1280.0 154.3L1295.2 169.7z"/>
<path fill="#84584c" d="M1310.5 154.3L1340.9 154.3L1325.7 169.7z"/>
<path fill="#7c5038" d="M1340.9 154.3L1340.9 185.1L1325.7 169.7z"/>
<path fill="#74709c" d="M1340.9 185.1L1310.5 185.1L1325.7 169.7z"/>
<path fill="#644444" d="M1310.5 185.1L1310.5 154.3L1325.7 169.7z"/>
<path fill="#2c2834" d="M1340.9 154.3L1371.4 154.3L1356.2 169.7z"/>
<path fill="#2c2834" d="M1371.4 154.3L1371.4 185.1L1356.2 169.7z"/>
<path fill="#2c2834" d="M1371.4 185.1L1340.9 185.1L1356.2 169.7z"/>
<path fill="#2c2834" d="M1340.9 185.1L1340.9 154.3L1356.2 169.7z"/>
<path fill="#bca890" d="M1371.4 154.3L1401.9 154.3L1386.7 169.7z"/>
<path fill="#94a4cc" d="M1401.9 154.3L1401.9 185.1L1386.7 169.7z"/>
<path fill="#5c7498" d="M1401.9 185.1L1371.4 185.1L1386.7 169.7z"/>
<path fill="#94b4dc" d="M1371.4 185.1L1371.4 154.3L1386.7 169.7z"/>
<path fill="#c0b098" d="M1401.9 154.3L1432.4 154.3L1417.1 169.7z"/>
<path fill="#84747c" d="M1432.4 154.3L1432.4 185.1L1417.1 169.7z"/>
<path fill="#dcc4ec" d="M1432.4 185.1L1401.9 185.1L1417.1 169.7z"/>
<path fill="#c8c4c4" d="M1401.9 185.1L1401.9 154.3L1417.1 169.7z"/>
<path fill="#1c3434" d="M1432.4 154.3L1462.8 154.3L1447.6 169.7z"/>
<path fill="#1c2c30" d="M1462.8 154.3L1462.8 185.1L1447.6 169.7z"/>
<path fill="#202424" d="M1462.8 185.1L1432.4 185.1L1447.6 169.7z"/>
<path fill="#2c2c30" d="M1432.4 185.1L1432.4 154.3L1447.6 169.7z"/>
<path fill="#3c3c4c" d="M1462.8 154.3L1493.3 154.3L1478.1 169.7z"/>
<path fill="#c4f4fc" d="M1493.3 154.3L1493.3 185.1L1478.1 169.7z"/>
<path fill="#0c3428" d="M1493.3 185.1L1462.8 185.1L1478.1 169.7z"/>
<path fill="#383848" d="M1462.8 185.1L1462.8 154.3L1478.1 169.7z"/>
<path fill="#8cc8f0" d="M1493.3 154.3L1523.8 154.3L1508.6 169.7z"/>
<path fill="#a4dcfc" d="M1523.8 154.3L1523.8 185.1L1508.6 169.7z"/>
<path fill="#b0ecfc" d="M1523.8 185.1L1493.3 185.1L1508.6 169.7z"/>
<path fill="#6ca8d0" d="M1493.3 185.1L1493.3 154.3L1508.6 169.7z"/>
<path fill="#e4c4a4" d="M1523.8 154.3L1554.3 154.3L1539.0 169.7z"/>
<path fill="#0c0808" d="M1554.3 154.3L1554.3 185.1L1539.0 169.7z"/>
<path fill="#b8ecfc" d="M1554.3 185.1L1523.8 185.1L1539.0 169.7z"/>
<path fill="#a4e0fc" d="M1523.8 185.1L1523.8 154.3L1539.0 169.7z"/>
<path fill="#6084a8" d="M1554.3 154.3L1584.8 154.3L1569.5 169.7z"/>
<path fill="#9cd4fc" d="M1584.8 154.3L1584.8 185.1L1569.5 169.7z"/>
<path fill="#a47850" d="M1584.8 185.1L1554.3 185.1L1569.5 169.7z"/>
<path fill="#7c5c50" d="M1554.3 185.1L1554.3 154.3L1569.5 169.7z"/>
<path fill="#74acc4" d="M1584.8 154.3L1615.2 154.3L1600.0 169.7z"/>
<path fill="#70a8c0" d="M1615.2 154.3L1615.2 185.1L1600.0 169.7z"/>
<path fill="#5c8cc4" d="M1615.2 185.1L1584.8 185.1L1600.0 169.7z"/>
<path fill="#4c4840" d="M1584.8 185.1L1584.8 154.3L1600.0 169.7z"/>
<path fill="#3c88ac" d="M1615.2 154.3L1645.7 154.3L1630.5 169.7z"/>
<path fill="#4484ac" d="M1645.7 154.3L1645.7 185.1L1630.5 169.7z"/>
<path fill="#282c2c" d="M1645.7 185.1L1615.2 185.1L1630.5 169.7z"/>
<path fill="#2c3030" d="M1615.2 185.1L1615.2 154.3L1630.5 169.7z"/>
<path fill="#a4a89c" d="M1645.7 154.3L1676.2 154.3L1660.9 169.7z"/>
<path fill="#a0a89c" d="M1676.2 154.3L1676.2 185.1L1660.9 169.7z"/>
<path fill="#4c6c8c" d="M1676.2 185.1L1645.7 185.1L1660.9 169.7z"/>
<path fill="#5c7c9c" d="M1645.7 185.1L1645.7 154.3L1660.9 169.7z"/>
<path fill="#a8a8a0" d="M1676.2 154.3L1706.7 154.3L1691.4 169.7z"/>
<path fill="#a8a8a0" d="M1706.7 154.3L1706.7 185.1L1691.4 169.7z"/>
<path fill="#a8a8a0" d="M1706.7 185.1L1676.2 185.1L1691.4 169.7z"/>
<path fill="#a8a8a0" d="M1676.2 185.1L1676.2 154.3L1691.4 169.7z"/>
<path fill="#a8aca0" d="M1706.7 154.3L1737.1 154.3L1721.9 169.7z"/>
<path fill="#a8aca0" d="M1737.1 154.3L1737.1 185.1L1721.9 169.7z"/>
<path fill="#a8aca0" d="M1737.1 185.1L1706.7 185.1L1721.9 169.7z"/>
<path fill="#a8aca0" d="M1706.7 185.1L1706.7 154.3L1721.9 169.7z"/>
<path fill="#8c5c54" d="M1737.1 154.3L1767.6 154.3L1752.4 169.7z"/>
<path fill="#0c0808" d="M1767.6 154.3L1767.6 185.1L1752.4 169.7z"/>
<path fill="#1c4c74" d="M1767.6 185.1L1737.1 185.1L1752.4 169.7z"/>
<path fill="#040404" d="M1737.1 185.1L1737.1 154.3L1752.4 169.7z"/>
<path fill="#8c5850" d="M1767.6 154.3L1798.1 154.3L1782.8 169.7z"/>
<path fill="#1c100c" d="M1798.1 154.3L1798.1 185.1L1782.8 169.7z"/>
<path fill="#a87468" d="M1798.1 185.1L1767.6 185.1L1782.8 169.7z"/>
<path fill="#8c5448" d="M1767.6 185.1L1767.6 154.3L1782.8 169.7z"/>
<path fill="#a8a8a0" d="M1798.1 154.3L1828.6 154.3L1813.3 169.7z"/>
<path fill="#a8a8a0" d="M1828.6 154.3L1828.6 185.1L1813.3 169.7z"/>
<path fill="#a8a4a0" d="M1828.6 185.1L1798.1 185.1L1813.3 169.7z"/>
<path fill="#040404" d="M1798.1 185.1L1798.1 154.3L1813.3 169.7z"/>
<path fill="#a8aca0" d="M1828.6 154.3L1859.0 154.3L1843.8 169.7z"/>
<path fill="#8c9490" d="M1859.0 154.3L1859.0 185.1L1843.8 169.7z"/>
<path fill="#a0a098" d="M1859.0 185.1L1828.6 185.1L1843.8 169.7z"/>
<path fill="#a8aca0" d="M1828.6 185.1L1828.6 154.3L1843.8 169.7z"/>
<path fill="#a6ae9e" d="M1859.0 154.3L1889.5 154.3L1874.3 169.7z"/>
<path fill="#a6ae9e" d="M1889.5 185.1L1859.0 185.1L1874.3 169.7z"/>
<path fill="#a6ae9e" d="M1859.0 185.1L1859.0 154.3L1874.3 169.7z"/>
<path fill="#d8e2ea" d="M61.0 185.1L91.4 185.1L76.2 200.6z"/>
<path fill="#dde4e4" d="M91.4 185.1L91.4 208.5L84.0 208.5L76.2 200.6z"/>
<path fill="#4a7898" d="M91.4 185.1L121.9 185.1L106.7 200.6z"/>
<path fill="#3a6c90" d="M121.9 185.1L121.9 208.5L114.5 208.5L106.7 200.6z"/>
<path fill="#2c4660" d="M98.8 208.5L114.5 208.5L106.7 200.6z"/>
<path fill="#b8d0e4" d="M91.4 216.0L91.4 185.1L106.7 200.6z"/>
<path fill="#0e1e30" d="M121.9 185.1L152.4 185.1L137.1 200.6z"/>
<path fill="#0c1c2c" d="M152.4 185.1L152.4 208.5L145.0 208.5L137.1 200.6z"/>
<path fill="#0e1a28" d="M129.3 208.5L145.0 208.5L137.1 200.6z"/>
<path fill="#3a7096" d="M121.9 216.0L121.9 185.1L137.1 200.6z"/>
<path fill="#8c6a62" d="M152.4 185.1L182.9 185.1L167.6 200.6z"/>
<path fill="#6a4c48" d="M182.9 185.1L182.9 208.5L175.4 208.5L167.6 200.6z"/>
<path fill="#2a2428" d="M159.8 208.5L175.4 208.5L167.6 200.6z"/>
<path fill="#0e1c2c" d="M152.4 216.0L152.4 185.1L167.6 200.6z"/>
<path fill="#141c2c" d="M182.9 185.1L213.3 185.1L198.1 200.6z"/>
<path fill="#101828" d="M213.3 185.1L213.3 208.5L205.9 208.5L198.1 200.6z"/>
<path fill="#0c1420" d="M190.3 208.5L205.9 208.5L198.1 200.6z"/>
<path fill="#0c1a2a" d="M182.9 216.0L182.9 185.1L198.1 200.6z"/>
<path fill="#4c7c9c" d="M213.3 185.1L243.8 185.1L228.6 200.6z"/>
<path fill="#5a8cac" d="M243.8 185.1L243.8 208.5L236.4 208.5L228.6 200.6z"/>
<path fill="#5a86a6" d="M220.7 208.5L236.4 208.5L228.6 200.6z"/>
<path fill="#0e1a2a" d="M213.3 216.0L213.3 185.1L228.6 200.6z"/>
<path fill="#c4e0f4" d="M243.8 185.1L274.3 185.1L259.0 200.6z"/>
<path fill="#d4e8f8" d="M274.3 185.1L274.3 208.5L266.9 208.5L259.0 200.6z"/>
<path fill="#b0cce4" d="M251.2 208.5L266.9 208.5L259.0 200.6z"/>
<path fill="#4a84a8" d="M243.8 216.0L243.8 185.1L259.0 200.6z"/>
<path fill="#0a0c0e" d="M274.3 185.1L304.8 185.1L289.5 200.6z"/>
<path fill="#ffffff" d="M304.8 185.1L304.8 208.5L297.4 208.5L289.5 200.6z"/>
<path fill="#fdfdfd" d="M281.7 208.5L297.4 208.5L289.5 200.6z"/>
<path fill="#dfe4ee" d="M274.3 216.0L274.3 185.1L289.5 200.6z"/>
<path fill="#fefcfe" d="M304.8 185.1L335.2 185.1L320.0 200.6z"/>
<path fill="#fefcfe" d="M335.2 185.1L335.2 208.5L327.8 208.5L320.0 200.6z"/>
<path fill="#fefcfe" d="M312.2 208.5L327.8 208.5L320.0 200.6z"/>
<path fill="#fefcfe" d="M304.8 216.0L304.8 185.1L320.0 200.6z"/>
<path fill="#3c3034" d="M335.2 185.1L365.7 185.1L350.5 200.6z"/>
<path fill="#0a0608" d="M365.7 185.1L365.7 208.5L358.3 208.5L350.5 200.6z"/>
<path fill="#2a2224" d="M342.6 208.5L358.3 208.5L350.5 200.6z"/>
<path fill="#fefcfe" d="M335.2 216.0L335.2 185.1L350.5 200.6z"/>
<path fill="#1c1a1c" d="M365.7 185.1L396.2 185.1L380.9 200.6z"/>
<path fill="#100c0e" d="M396.2 185.1L396.2 208.5L388.8 208.5L380.9 200.6z"/>
<path fill="#0a0608" d="M373.1 208.5L388.8 208.5L380.9 200.6z"/>
<path fill="#040406" d="M365.7 216.0L365.7 185.1L380.9 200.6z"/>
<path fill="#020202" d="M396.2 185.1L426.7 185.1L411.4 200.6z"/>
<path fill="#000000" d="M426.7 185.1L426.7 208.5L419.3 208.5L411.4 200.6z"/>
<path fill="#000000" d="M403.6 208.5L419.3 208.5L411.4 200.6z"/>
<path fill="#000000" d="M396.2 216.0L396.2 185.1L411.4 200.6z"/>
<path fill="#1e3a3a" d="M426.7 185.1L457.1 185.1L441.9 200.6z"/>
<path fill="#fdfdfd" d="M457.1 185.1L457.1 208.5L449.7 208.5L441.9 200.6z"/>
<path fill="#fdfdfd" d="M434.1 208.5L449.7 208.5L441.9 200.6z"/>
<path fill="#000000" d="M426.7 216.0L426.7 185.1L441.9 200.6z"/>
<path fill="#fefcfe" d="M457.1 185.1L487.6 185.1L472.4 200.6z"/>
<path fill="#fefcfe" d="M487.6 185.1L487.6 208.5L480.2 208.5L472.4 200.6z"/>
<path fill="#fefcfe" d="M464.5 208.5L480.2 208.5L472.4 200.6z"/>
<path fill="#fefcfe" d="M457.1 216.0L457.1 185.1L472.4 200.6z"/>
<path fill="#fefcfe" d="M487.6 185.1L518.1 185.1L502.9 200.6z"/>
<path fill="#fefcfe" d="M518.1 185.1L518.1 208.5L510.7 208.5L502.9 200.6z"/>
<path fill="#fefcfe" d="M495.0 208.5L510.7 208.5L502.9 200.6z"/>
<path fill="#fefcfe" d="M487.6 216.0L487.6 185.1L502.9 200.6z"/>
<path fill="#d8d890" d="M518.1 185.1L548.6 185.1L533.3 200.6z"/>
<path fill="#d4d48c" d="M548.6 185.1L548.6 208.5L541.2 208.5L533.3 200.6z"/>
<path fill="#c8c880" d="M525.5 208.5L541.2 208.5L533.3 200.6z"/>
<path fill="#c8cac4" d="M518.1 216.0L518.1 185.1L533.3 200.6z"/>
<path fill="#586a80" d="M548.6 185.1L579.0 185.1L563.8 200.6z"/>
<path fill="#a4d4f4" d="M579.0 185.1L579.0 208.5L571.6 208.5L563.8 200.6z"/>
<path fill="#8ab4d4" d="M556.0 208.5L571.6 208.5L563.8 200.6z"/>
<path fill="#9c9e86" d="M548.6 216.0L548.6 185.1L563.8 200.6z"/>
<path fill="#2c2e3c" d="M579.0 185.1L609.5 185.1L594.3 200.6z"/>
<path fill="#2a2c38" d="M609.5 185.1L609.5 208.5L602.1 208.5L594.3 200.6z"/>
<path fill="#30343c" d="M586.5 208.5L602.1 208.5L594.3 200.6z"/>
<path fill="#a4dcfc" d="M579.0 216.0L579.0 185.1L594.3 200.6z"/>
<path fill="#323646" d="M609.5 185.1L640.0 185.1L624.8 200.6z"/>
<path fill="#7a98b8" d="M640.0 185.1L640.0 208.5L632.6 208.5L624.8 200.6z"/>
<path fill="#6a88a8" d="M616.9 208.5L632.6 208.5L624.8 200.6z"/>
<path fill="#2c2e3a" d="M609.5 216.0L609.5 185.1L624.8 200.6z"/>
<path fill="#2a2a2c" d="M640.0 185.1L670.5 185.1L655.2 200.6z"/>
<path fill="#28282c" d="M670.5 185.1L670.5 208.5L663.1 208.5L655.2 200.6z"/>
<path fill="#303038" d="M647.4 208.5L663.1 208.5L655.2 200.6z"/>
<path fill="#2c3040" d="M640.0 216.0L640.0 185.1L655.2 200.6z"/>
<path fill="#6a9ace" d="M670.5 185.1L700.9 185.1L685.7 200.6z"/>
<path fill="#8ab0d4" d="M700.9 185.1L700.9 208.5L693.5 208.5L685.7 200.6z"/>
<path fill="#7aa4cc" d="M677.9 208.5L693.5 208.5L685.7 200.6z"/>
<path fill="#2a2a2e" d="M670.5 216.0L670.5 185.1L685.7 200.6z"/>
<path fill="#e0a8d8" d="M700.9 185.1L731.4 185.1L716.2 200.6z"/>
<path fill="#e4acd8" d="M731.4 185.1L731.4 208.5L724.0 208.5L716.2 200.6z"/>
<path fill="#e8a8d0" d="M708.4 208.5L724.0 208.5L716.2 200.6z"/>
<path fill="#9cb4cc" d="M700.9 216.0L700.9 185.1L716.2 200.6z"/>
<path fill="#d8c078" d="M731.4 185.1L761.9 185.1L746.7 200.6z"/>
<path fill="#dcc480" d="M761.9 185.1L761.9 208.5L754.5 208.5L746.7 200.6z"/>
<path fill="#d4bc74" d="M738.8 208.5L754.5 208.5L746.7 200.6z"/>
<path fill="#d0a0d8" d="M731.4 216.0L731.4 185.1L746.7 200.6z"/>
<path fill="#e8ddd2" d="M761.9 185.1L792.4 185.1L777.1 200.6z"/>
<path fill="#777777" d="M792.4 185.1L792.4 208.5L785.0 208.5L777.1 200.6z"/>
<path fill="#555555" d="M769.3 208.5L785.0 208.5L777.1 200.6z"/>
<path fill="#d8c47e" d="M761.9 216.0L761.9 185.1L777.1 200.6z"/>
<path fill="#8cb6de" d="M792.4 185.1L822.9 185.1L807.6 200.6z"/>
<path fill="#7a9cc4" d="M822.9 185.1L822.9 208.5L815.4 208.5L807.6 200.6z"/>
<path fill="#88b2da" d="M799.8 208.5L815.4 208.5L807.6 200.6z"/>
<path fill="#88b4dc" d="M792.4 216.0L792.4 185.1L807.6 200.6z"/>
<path fill="#a87858" d="M822.9 185.1L853.3 185.1L838.1 200.6z"/>
<path fill="#c09060" d="M853.3 185.1L853.3 208.5L845.9 208.5L838.1 200.6z"/>
<path fill="#b08860" d="M830.3 208.5L845.9 208.5L838.1 200.6z"/>
<path fill="#7c6c68" d="M822.9 216.0L822.9 185.1L838.1 200.6z"/>
<path fill="#6c94cc" d="M853.3 185.1L883.8 185.1L868.6 200.6z"/>
<path fill="#88a8cc" d="M883.8 185.1L883.8 208.5L876.4 208.5L868.6 200.6z"/>
<path fill="#a0c0e0" d="M860.7 208.5L876.4 208.5L868.6 200.6z"/>
<path fill="#b89880" d="M853.3 216.0L853.3 185.1L868.6 200.6z"/>
<path fill="#4e463e" d="M883.8 185.1L914.3 185.1L899.0 200.6z"/>
<path fill="#a8a498" d="M914.3 185.1L914.3 208.5L906.9 208.5L899.0 200.6z"/>
<path fill="#888478" d="M891.2 208.5L906.9 208.5L899.0 200.6z"/>
<path fill="#8caec6" d="M883.8 216.0L883.8 185.1L899.0 200.6z"/>
<path fill="#4c4834" d="M914.3 185.1L944.8 185.1L929.5 200.6z"/>
<path fill="#a09050" d="M944.8 185.1L944.8 208.5L937.3 208.5L929.5 200.6z"/>
<path fill="#807840" d="M921.7 208.5L937.3 208.5L929.5 200.6z"/>
<path fill="#c0c0bc" d="M914.3 216.0L914.3 185.1L929.5 200.6z"/>
<path fill="#4c3418" d="M944.8 185.1L975.2 185.1L960.0 200.6z"/>
<path fill="#3c2c14" d="M975.2 185.1L975.2 208.5L967.8 208.5L960.0 200.6z"/>
<path fill="#3c2c18" d="M952.2 208.5L967.8 208.5L960.0 200.6z"/>
<path fill="#7c6448" d="M944.8 216.0L944.8 185.1L960.0 200.6z"/>
<path fill="#8490a8" d="M975.2 185.1L1005.7 185.1L990.5 200.6z"/>
<path fill="#b0c8e0" d="M1005.7 185.1L1005.7 208.5L998.3 208.5L990.5 200.6z"/>
<path fill="#a0b8d4" d="M982.6 208.5L998.3 208.5L990.5 200.6z"/>
<path fill="#6c606c" d="M975.2 216.0L975.2 185.1L990.5 200.6z"/>
<path fill="#8cb0d0" d="M1005.7 185.1L1036.2 185.1L1020.9 200.6z"/>
<path fill="#90a8c0" d="M1036.2 185.1L1036.2 208.5L1028.8 208.5L1020.9 200.6z"/>
<path fill="#98b4d0" d="M1013.1 208.5L1028.8 208.5L1020.9 200.6z"/>
<path fill="#a8c8e0" d="M1005.7 216.0L1005.7 185.1L1020.9 200.6z"/>
<path fill="#6c7c88" d="M1036.2 185.1L1066.7 185.1L1051.4 200.6z"/>
<path fill="#7c8c9c" d="M1066.7 185.1L1066.7 208.5L1059.3 208.5L1051.4 200.6z"/>
<path fill="#8494a4" d="M1043.6 208.5L1059.3 208.5L1051.4 200.6z"/>
<path fill="#5c6470" d="M1036.2 216.0L1036.2 185.1L1051.4 200.6z"/>
<path fill="#8caabb" d="M1066.7 185.1L1097.1 185.1L1081.9 200.6z"/>
<path fill="#a8c4d4" d="M1097.1 185.1L1097.1 208.5L1089.7 208.5L1081.9 200.6z"/>
<path fill="#9cb8cc" d="M1074.1 208.5L1089.7 208.5L1081.9 200.6z"/>
<path fill="#7c8c9c" d="M1066.7 216.0L1066.7 185.1L1081.9 200.6z"/>
<path fill="#140c10" d="M1097.1 185.1L1127.6 185.1L1112.4 200.6z"/>
<path fill="#100808" d="M1127.6 185.1L1127.6 208.5L1120.2 208.5L1112.4 200.6z"/>
<path fill="#0c0608" d="M1104.5 208.5L1120.2 208.5L1112.4 200.6z"/>
<path fill="#100a0e" d="M1097.1 216.0L1097.1 185.1L1112.4 200.6z"/>
<path fill="#dcc8a8" d="M1127.6 185.1L1158.1 185.1L1142.9 200.6z"/>
<path fill="#3c2c28" d="M1158.1 185.1L1158.1 208.5L1150.7 208.5L1142.9 200.6z"/>
<path fill="#d4bc9c" d="M1135.0 208.5L1150.7 208.5L1142.9 200.6z"/>
<path fill="#d8c0a0" d="M1127.6 216.0L1127.6 185.1L1142.9 200.6z"/>
<path fill="#0a0408" d="M1158.1 185.1L1188.6 185.1L1173.3 200.6z"/>
<path fill="#101418" d="M1188.6 185.1L1188.6 208.5L1181.2 208.5L1173.3 200.6z"/>
<path fill="#0a0408" d="M1165.5 208.5L1181.2 208.5L1173.3 200.6z"/>
<path fill="#0a0408" d="M1158.1 216.0L1158.1 185.1L1173.3 200.6z"/>
<path fill="#e0d8cc" d="M1188.6 185.1L1219.0 185.1L1203.8 200.6z"/>
<path fill="#dcd4c4" d="M1219.0 185.1L1219.0 208.5L1211.6 208.5L1203.8 200.6z"/>
<path fill="#dcd4c8" d="M1196.0 208.5L1211.6 208.5L1203.8 200.6z"/>
<path fill="#181c20" d="M1188.6 216.0L1188.6 185.1L1203.8 200.6z"/>
<path fill="#a8b8d8" d="M1219.0 185.1L1249.5 185.1L1234.3 200.6z"/>
<path fill="#7084ac" d="M1249.5 185.1L1249.5 208.5L1242.1 208.5L1234.3 200.6z"/>
<path fill="#90a0c4" d="M1226.4 208.5L1242.1 208.5L1234.3 200.6z"/>
<path fill="#e4dccc" d="M1219.0 216.0L1219.0 185.1L1234.3 200.6z"/>
<path fill="#5c6c90" d="M1249.5 185.1L1280.0 185.1L1264.8 200.6z"/>
<path fill="#5c6c8c" d="M1280.0 185.1L1280.0 208.5L1272.6 208.5L1264.8 200.6z"/>
<path fill="#64749c" d="M1256.9 208.5L1272.6 208.5L1264.8 200.6z"/>
<path fill="#7484a8" d="M1249.5 216.0L1249.5 185.1L1264.8 200.6z"/>
<path fill="#342c38" d="M1280.0 185.1L1310.5 185.1L1295.2 200.6z"/>
<path fill="#4c5470" d="M1310.5 185.1L1310.5 208.5L1303.1 208.5L1295.2 200.6z"/>
<path fill="#444c64" d="M1287.4 208.5L1303.1 208.5L1295.2 200.6z"/>
<path fill="#3c3848" d="M1280.0 216.0L1280.0 185.1L1295.2 200.6z"/>
<path fill="#5c4c58" d="M1310.5 185.1L1340.9 185.1L1325.7 200.6z"/>
<path fill="#3c3444" d="M1340.9 185.1L1340.9 208.5L1333.5 208.5L1325.7 200.6z"/>
<path fill="#4c4c64" d="M1317.9 208.5L1333.5 208.5L1325.7 200.6z"/>
<path fill="#4c6488" d="M1310.5 216.0L1310.5 185.1L1325.7 200.6z"/>
<path fill="#2c2834" d="M1340.9 185.1L1371.4 185.1L1356.2 200.6z"/>
<path fill="#5a7092" d="M1371.4 185.1L1371.4 208.5L1364.0 208.5L1356.2 200.6z"/>
<path fill="#3c4458" d="M1348.4 208.5L1364.0 208.5L1356.2 200.6z"/>
<path fill="#34303c" d="M1340.9 216.0L1340.9 185.1L1356.2 200.6z"/>
<path fill="#5c7498" d="M1371.4 185.1L1401.9 185.1L1386.7 200.6z"/>
<path fill="#6480a8" d="M1401.9 185.1L1401.9 208.5L1394.5 208.5L1386.7 200.6z"/>
<path fill="#6078a0" d="M1378.8 208.5L1394.5 208.5L1386.7 200.6z"/>
<path fill="#6c80a4" d="M1371.4 216.0L1371.4 185.1L1386.7 200.6z"/>
<path fill="#b8b0a8" d="M1401.9 185.1L1432.4 185.1L1417.1 200.6z"/>
<path fill="#a8a098" d="M1432.4 185.1L1432.4 208.5L1425.0 208.5L1417.1 200.6z"/>
<path fill="#b0a8a0" d="M1409.3 208.5L1425.0 208.5L1417.1 200.6z"/>
<path fill="#7c8cac" d="M1401.9 216.0L1401.9 185.1L1417.1 200.6z"/>
<path fill="#1c2020" d="M1432.4 185.1L1462.8 185.1L1447.6 200.6z"/>
<path fill="#181c1c" d="M1462.8 185.1L1462.8 208.5L1455.4 208.5L1447.6 200.6z"/>
<path fill="#141818" d="M1439.8 208.5L1455.4 208.5L1447.6 200.6z"/>
<path fill="#181410" d="M1432.4 216.0L1432.4 185.1L1447.6 200.6z"/>
<path fill="#a8e6fc" d="M1462.8 185.1L1493.3 185.1L1478.1 200.6z"/>
<path fill="#a8e6fc" d="M1493.3 185.1L1493.3 208.5L1485.9 208.5L1478.1 200.6z"/>
<path fill="#a8e6fc" d="M1470.3 208.5L1485.9 208.5L1478.1 200.6z"/>
<path fill="#a8e6fc" d="M1462.8 216.0L1462.8 185.1L1478.1 200.6z"/>
<path fill="#a8e0fc" d="M1493.3 185.1L1523.8 185.1L1508.6 200.6z"/>
<path fill="#b0e4fc" d="M1523.8 185.1L1523.8 208.5L1516.4 208.5L1508.6 200.6z"/>
<path fill="#a8e0fc" d="M1500.7 208.5L1516.4 208.5L1508.6 200.6z"/>
<path fill="#84c0f0" d="M1493.3 216.0L1493.3 185.1L1508.6 200.6z"/>
<path fill="#040408" d="M1523.8 185.1L1554.3 185.1L1539.0 200.6z"/>
<path fill="#080808" d="M1554.3 185.1L1554.3 208.5L1546.9 208.5L1539.0 200.6z"/>
<path fill="#0c0c10" d="M1531.2 208.5L1546.9 208.5L1539.0 200.6z"/>
<path fill="#0c1c4c" d="M1523.8 216.0L1523.8 185.1L1539.0 200.6z"/>
<path fill="#9cd0fc" d="M1554.3 185.1L1584.8 185.1L1569.5 200.6z"/>
<path fill="#88b4ec" d="M1584.8 185.1L1584.8 208.5L1577.3 208.5L1569.5 200.6z"/>
<path fill="#94c4f4" d="M1561.7 208.5L1577.3 208.5L1569.5 200.6z"/>
<path fill="#040408" d="M1554.3 216.0L1554.3 185.1L1569.5 200.6z"/>
<path fill="#5c94c4" d="M1584.8 185.1L1615.2 185.1L1600.0 200.6z"/>
<path fill="#a4bcd8" d="M1615.2 185.1L1615.2 208.5L1607.8 208.5L1600.0 200.6z"/>
<path fill="#88b0dc" d="M1592.2 208.5L1607.8 208.5L1600.0 200.6z"/>
<path fill="#7cacec" d="M1584.8 216.0L1584.8 185.1L1600.0 200.6z"/>
<path fill="#34587c" d="M1615.2 185.1L1645.7 185.1L1630.5 200.6z"/>
<path fill="#7cb4dc" d="M1645.7 185.1L1645.7 208.5L1638.3 208.5L1630.5 200.6z"/>
<path fill="#5c8cb8" d="M1622.6 208.5L1638.3 208.5L1630.5 200.6z"/>
<path fill="#1c2024" d="M1615.2 216.0L1615.2 185.1L1630.5 200.6z"/>
<path fill="#a0a498" d="M1645.7 185.1L1676.2 185.1L1660.9 200.6z"/>
<path fill="#a4a89c" d="M1676.2 185.1L1676.2 208.5L1668.8 208.5L1660.9 200.6z"/>
<path fill="#a0a498" d="M1653.1 208.5L1668.8 208.5L1660.9 200.6z"/>
<path fill="#4c6484" d="M1645.7 216.0L1645.7 185.1L1660.9 200.6z"/>
<path fill="#e08c8c" d="M1676.2 185.1L1706.7 185.1L1691.4 200.6z"/>
<path fill="#dc8888" d="M1706.7 185.1L1706.7 208.5L1699.2 208.5L1691.4 200.6z"/>
<path fill="#e08c8c" d="M1683.6 208.5L1699.2 208.5L1691.4 200.6z"/>
<path fill="#a4ac9c" d="M1676.2 216.0L1676.2 185.1L1691.4 200.6z"/>
<path fill="#7cc0f0" d="M1706.7 185.1L1737.1 185.1L1721.9 200.6z"/>
<path fill="#74bcec" d="M1737.1 185.1L1737.1 208.5L1729.7 208.5L1721.9 200.6z"/>
<path fill="#78bcec" d="M1714.1 208.5L1729.7 208.5L1721.9 200.6z"/>
<path fill="#e08888" d="M1706.7 216.0L1706.7 185.1L1721.9 200.6z"/>
<path fill="#58a8dc" d="M1737.1 185.1L1767.6 185.1L1752.4 200.6z"/>
<path fill="#5c4440" d="M1767.6 185.1L1767.6 208.5L1760.2 208.5L1752.4 200.6z"/>
<path fill="#4c84b0" d="M1744.5 208.5L1760.2 208.5L1752.4 200.6z"/>
<path fill="#70b8e8" d="M1737.1 216.0L1737.1 185.1L1752.4 200.6z"/>
<path fill="#040404" d="M1767.6 185.1L1798.1 185.1L1782.8 200.6z"/>
<path fill="#6cbcf0" d="M1798.1 185.1L1798.1 208.5L1790.7 208.5L1782.8 200.6z"/>
<path fill="#2c2420" d="M1775.0 208.5L1790.7 208.5L1782.8 200.6z"/>
<path fill="#5c443c" d="M1767.6 216.0L1767.6 185.1L1782.8 200.6z"/>
<path fill="#70c0f0" d="M1798.1 185.1L1828.6 185.1L1813.3 200.6z"/>
<path fill="#dc8088" d="M1828.6 185.1L1828.6 208.5L1821.2 208.5L1813.3 200.6z"/>
<path fill="#70c0f0" d="M1805.5 208.5L1821.2 208.5L1813.3 200.6z"/>
<path fill="#6cbcf0" d="M1798.1 216.0L1798.1 185.1L1813.3 200.6z"/>
<path fill="#8c948c" d="M1828.6 185.1L1859.0 185.1L1843.8 200.6z"/>
<path fill="#a4a89c" d="M1859.0 185.1L1859.0 208.5L1851.6 208.5L1843.8 200.6z"/>
<path fill="#a4a89c" d="M1836.0 208.5L1851.6 208.5L1843.8 200.6z"/>
<path fill="#dc8088" d="M1828.6 216.0L1828.6 185.1L1843.8 200.6z"/>
<path fill="#a4a89c" d="M1859.0 185.1L1889.5 185.1L1874.3 200.6z"/>
<path fill="#a4a89c" d="M1866.4 208.5L1882.1 208.5L1874.3 200.6z"/>
<path fill="#a4a89c" d="M1859.0 216.0L1859.0 185.1L1874.3 200.6z"/>
<path fill="#fdfafa" d="M216.0 783.2L243.1 783.2L229.6 796.7z"/>
<path fill="#fdfafa" d="M243.1 783.2L243.1 810.2L229.6 796.7z"/>
<path fill="#2e3038" d="M243.1 783.2L270.3 783.2L256.7 796.7z"/>
<path fill="#6b5a42" d="M270.3 783.2L270.3 810.2L256.7 796.7z"/>
<path fill="#8a7656" d="M270.3 810.2L243.1 810.2L256.7 796.7z"/>
<path fill="#b4c0dc" d="M243.1 810.2L243.1 783.2L256.7 796.7z"/>
<path fill="#150509" d="M270.3 783.2L297.4 783.2L283.8 796.7z"/>
<path fill="#6f5a78" d="M297.4 783.2L297.4 810.2L283.8 796.7z"/>
<path fill="#8a8378" d="M297.4 810.2L270.3 810.2L283.8 796.7z"/>
<path fill="#2a1a26" d="M270.3 810.2L270.3 783.2L283.8 796.7z"/>
<path fill="#0f0410" d="M297.4 783.2L324.5 783.2L311.0 796.7z"/>
<path fill="#8c8274" d="M324.5 783.2L324.5 810.2L311.0 796.7z"/>
<path fill="#b4aa96" d="M324.5 810.2L297.4 810.2L311.0 796.7z"/>
<path fill="#120414" d="M297.4 810.2L297.4 783.2L311.0 796.7z"/>
<path fill="#1a1a26" d="M324.5 783.2L351.6 783.2L338.1 796.7z"/>
<path fill="#8a8474" d="M351.6 783.2L351.6 810.2L338.1 796.7z"/>
<path fill="#000000" d="M351.6 810.2L324.5 810.2L338.1 796.7z"/>
<path fill="#5a4a66" d="M324.5 810.2L324.5 783.2L338.1 796.7z"/>
<path fill="#8a8a2a" d="M351.6 783.2L378.8 783.2L365.2 796.7z"/>
<path fill="#b8aa58" d="M378.8 783.2L378.8 810.2L365.2 796.7z"/>
<path fill="#5e4a26" d="M378.8 810.2L351.6 810.2L365.2 796.7z"/>
<path fill="#34506a" d="M351.6 810.2L351.6 783.2L365.2 796.7z"/>
<path fill="#fdfafa" d="M216.0 810.2L243.1 810.2L229.6 823.7z"/>
<path fill="#fdfafa" d="M243.1 810.2L243.1 837.2L229.6 823.7z"/>
<path fill="#6e4c5a" d="M243.1 810.2L270.3 810.2L256.7 823.7z"/>
<path fill="#a88cb0" d="M270.3 810.2L270.3 837.2L256.7 823.7z"/>
<path fill="#1e4464" d="M270.3 837.2L243.1 837.2L256.7 823.7z"/>
<path fill="#cfc4b0" d="M243.1 837.2L243.1 810.2L256.7 823.7z"/>
<path fill="#c4b8a4" d="M270.3 810.2L297.4 810.2L283.8 823.7z"/>
<path fill="#cbc3ac" d="M297.4 810.2L297.4 837.2L283.8 823.7z"/>
<path fill="#c4b8a4" d="M297.4 837.2L270.3 837.2L283.8 823.7z"/>
<path fill="#e8409a" d="M270.3 837.2L270.3 810.2L283.8 823.7z"/>
<path fill="#c6bca6" d="M297.4 810.2L324.5 810.2L311.0 823.7z"/>
<path fill="#cac2aa" d="M324.5 810.2L324.5 837.2L311.0 823.7z"/>
<path fill="#c2b8a2" d="M324.5 837.2L297.4 837.2L311.0 823.7z"/>
<path fill="#ccc4ae" d="M297.4 837.2L297.4 810.2L311.0 823.7z"/>
<path fill="#6cb4e0" d="M324.5 810.2L351.6 810.2L338.1 823.7z"/>
<path fill="#d2ccd8" d="M351.6 810.2L351.6 837.2L338.1 823.7z"/>
<path fill="#c8c0aa" d="M351.6 837.2L324.5 837.2L338.1 823.7z"/>
<path fill="#8a8a94" d="M324.5 837.2L324.5 810.2L338.1 823.7z"/>
<path fill="#e8c080" d="M351.6 810.2L378.8 810.2L365.2 823.7z"/>
<path fill="#d8c088" d="M378.8 810.2L378.8 837.2L365.2 823.7z"/>
<path fill="#a890a8" d="M378.8 837.2L351.6 837.2L365.2 823.7z"/>
<path fill="#c0b8b0" d="M351.6 837.2L351.6 810.2L365.2 823.7z"/>
<path fill="#fdfafa" d="M216.0 837.2L243.1 837.2L229.6 850.7z"/>
<path fill="#ddd6d2" d="M243.1 837.2L243.1 864.2L229.6 850.7z"/>
<path fill="#b00028" d="M243.1 837.2L270.3 837.2L256.7 850.7z"/>
<path fill="#e4dcd8" d="M270.3 837.2L270.3 864.2L256.7 850.7z"/>
<path fill="#e4dcd8" d="M270.3 864.2L243.1 864.2L256.7 850.7z"/>
<path fill="#a00024" d="M243.1 864.2L243.1 837.2L256.7 850.7z"/>
<path fill="#b8b098" d="M270.3 837.2L297.4 837.2L283.8 850.7z"/>
<path fill="#dcd4cc" d="M297.4 837.2L297.4 864.2L283.8 850.7z"/>
<path fill="#e0d6d0" d="M297.4 864.2L270.3 864.2L283.8 850.7z"/>
<path fill="#bab29c" d="M270.3 864.2L270.3 837.2L283.8 850.7z"/>
<path fill="#c0b69e" d="M297.4 837.2L324.5 837.2L311.0 850.7z"/>
<path fill="#e0d8d0" d="M324.5 837.2L324.5 864.2L311.0 850.7z"/>
<path fill="#e0d6d2" d="M324.5 864.2L297.4 864.2L311.0 850.7z"/>
<path fill="#bcb49c" d="M297.4 864.2L297.4 837.2L311.0 850.7z"/>
<path fill="#beb6a0" d="M324.5 837.2L351.6 837.2L338.1 850.7z"/>
<path fill="#e0d8d2" d="M351.6 837.2L351.6 864.2L338.1 850.7z"/>
<path fill="#e0d8d4" d="M351.6 864.2L324.5 864.2L338.1 850.7z"/>
<path fill="#bab29c" d="M324.5 864.2L324.5 837.2L338.1 850.7z"/>
<path fill="#7c7838" d="M351.6 837.2L378.8 837.2L365.2 850.7z"/>
<path fill="#e0d6d4" d="M378.8 837.2L378.8 864.2L365.2 850.7z"/>
<path fill="#e0d8d6" d="M378.8 864.2L351.6 864.2L365.2 850.7z"/>
<path fill="#a0c8e8" d="M351.6 864.2L351.6 837.2L365.2 850.7z"/>
<path fill="#dcc0c2" d="M243.1 864.2L243.1 891.2L229.6 877.7z"/>
<path fill="#e9e9e9" d="M243.1 864.2L270.3 864.2L256.7 877.7z"/>
<path fill="#e0c2c8" d="M270.3 864.2L270.3 891.2L256.7 877.7z"/>
<path fill="#dcbcc4" d="M270.3 891.2L243.1 891.2L256.7 877.7z"/>
<path fill="#e9e9e9" d="M243.1 891.2L243.1 864.2L256.7 877.7z"/>
<path fill="#e9e9e9" d="M270.3 864.2L297.4 864.2L283.8 877.7z"/>
<path fill="#e0c2c8" d="M297.4 864.2L297.4 891.2L283.8 877.7z"/>
<path fill="#dcbcc4" d="M297.4 891.2L270.3 891.2L283.8 877.7z"/>
<path fill="#e9e9e9" d="M270.3 891.2L270.3 864.2L283.8 877.7z"/>
<path fill="#e9e9e9" d="M297.4 864.2L324.5 864.2L311.0 877.7z"/>
<path fill="#e0c2c8" d="M324.5 864.2L324.5 891.2L311.0 877.7z"/>
<path fill="#dcbcc4" d="M324.5 891.2L297.4 891.2L311.0 877.7z"/>
<path fill="#e9e9e9" d="M297.4 891.2L297.4 864.2L311.0 877.7z"/>
<path fill="#e9e9e9" d="M324.5 864.2L351.6 864.2L338.1 877.7z"/>
<path fill="#e0c4c8" d="M351.6 864.2L351.6 891.2L338.1 877.7z"/>
<path fill="#dcc0c4" d="M351.6 891.2L324.5 891.2L338.1 877.7z"/>
<path fill="#e9e9e9" d="M324.5 891.2L324.5 864.2L338.1 877.7z"/>
<path fill="#e8e8e8" d="M351.6 864.2L378.8 864.2L365.2 877.7z"/>
<path fill="#dccac8" d="M378.8 864.2L378.8 891.2L365.2 877.7z"/>
<path fill="#dccac8" d="M378.8 891.2L351.6 891.2L365.2 877.7z"/>
<path fill="#e8e8e8" d="M351.6 891.2L351.6 864.2L365.2 877.7z"/>
<path fill="#fefdfb" d="M216.0 891.2L243.1 891.2L229.6 904.7z"/>
<path fill="#fefdfb" d="M243.1 891.2L243.1 918.2L229.6 904.7z"/>
<path fill="#e8c8dc" d="M243.1 891.2L270.3 891.2L256.7 904.7z"/>
<path fill="#fdfcfa" d="M270.3 891.2L270.3 918.2L256.7 904.7z"/>
<path fill="#fdfcfa" d="M270.3 918.2L243.1 918.2L256.7 904.7z"/>
<path fill="#fdfcfa" d="M243.1 918.2L243.1 891.2L256.7 904.7z"/>
<path fill="#fffffa" d="M270.3 891.2L297.4 891.2L283.8 904.7z"/>
<path fill="#8a8a7a" d="M297.4 891.2L297.4 918.2L283.8 904.7z"/>
<path fill="#fffffa" d="M297.4 918.2L270.3 918.2L283.8 904.7z"/>
<path fill="#f8f0f2" d="M270.3 918.2L270.3 891.2L283.8 904.7z"/>
<path fill="#fffff8" d="M297.4 891.2L324.5 891.2L311.0 904.7z"/>
<path fill="#4a5040" d="M324.5 891.2L324.5 918.2L311.0 904.7z"/>
<path fill="#8a8c78" d="M324.5 918.2L297.4 918.2L311.0 904.7z"/>
<path fill="#fffffa" d="M297.4 918.2L297.4 891.2L311.0 904.7z"/>
<path fill="#fffffa" d="M324.5 891.2L351.6 891.2L338.1 904.7z"/>
<path fill="#6e7264" d="M351.6 891.2L351.6 918.2L338.1 904.7z"/>
<path fill="#4e5a40" d="M351.6 918.2L324.5 918.2L338.1 904.7z"/>
<path fill="#fffffa" d="M324.5 918.2L324.5 891.2L338.1 904.7z"/>
<path fill="#dcc6c6" d="M351.6 891.2L378.8 891.2L365.2 904.7z"/>
<path fill="#dcc6c6" d="M378.8 891.2L378.8 918.2L365.2 904.7z"/>
<path fill="#fffef6" d="M378.8 918.2L351.6 918.2L365.2 904.7z"/>
<path fill="#fffef6" d="M351.6 918.2L351.6 891.2L365.2 904.7z"/>
<path fill="#fefdfb" d="M216.0 918.2L243.1 918.2L229.6 931.7z"/>
<path fill="#fefdfb" d="M243.1 918.2L243.1 945.2L229.6 931.7z"/>
<path fill="#fefdfb" d="M243.1 918.2L270.3 918.2L256.7 931.7z"/>
<path fill="#fefdfb" d="M270.3 918.2L270.3 945.2L256.7 931.7z"/>
<path fill="#fefdfb" d="M270.3 945.2L243.1 945.2L256.7 931.7z"/>
<path fill="#fefdfb" d="M243.1 945.2L243.1 918.2L256.7 931.7z"/>
<path fill="#8e8e78" d="M270.3 918.2L297.4 918.2L283.8 931.7z"/>
<path fill="#f0ecc8" d="M297.4 918.2L297.4 945.2L283.8 931.7z"/>
<path fill="#fffffa" d="M297.4 945.2L270.3 945.2L283.8 931.7z"/>
<path fill="#fffffa" d="M270.3 945.2L270.3 918.2L283.8 931.7z"/>
<path fill="#6e6a3a" d="M297.4 918.2L324.5 918.2L311.0 931.7z"/>
<path fill="#4a5274" d="M324.5 918.2L324.5 945.2L311.0 931.7z"/>
<path fill="#4a0a1e" d="M324.5 945.2L297.4 945.2L311.0 931.7z"/>
<path fill="#6a6838" d="M297.4 945.2L297.4 918.2L311.0 931.7z"/>
<path fill="#b4b4a8" d="M324.5 918.2L351.6 918.2L338.1 931.7z"/>
<path fill="#c4c43c" d="M351.6 918.2L351.6 945.2L338.1 931.7z"/>
<path fill="#04102a" d="M351.6 945.2L324.5 945.2L338.1 931.7z"/>
<path fill="#a8aca0" d="M324.5 945.2L324.5 918.2L338.1 931.7z"/>
<path fill="#dcc8c8" d="M351.6 918.2L378.8 918.2L365.2 931.7z"/>
<path fill="#dcc8c8" d="M378.8 918.2L378.8 945.2L365.2 931.7z"/>
<path fill="#fffef6" d="M378.8 945.2L351.6 945.2L365.2 931.7z"/>
<path fill="#fffef6" d="M351.6 945.2L351.6 918.2L365.2 931.7z"/>
<path fill="#fefdfb" d="M216.0 945.2L243.1 945.2L229.6 958.7z"/>
<path fill="#fefdfb" d="M243.1 945.2L243.1 972.2L229.6 958.7z"/>
<path fill="#fefdfb" d="M243.1 945.2L270.3 945.2L256.7 958.7z"/>
<path fill="#fefdfb" d="M270.3 945.2L270.3 972.2L256.7 958.7z"/>
<path fill="#fefdfb" d="M243.1 972.2L243.1 945.2L256.7 958.7z"/>
<path fill="#9a7850" d="M270.3 945.2L297.4 945.2L283.8 958.7z"/>
<path fill="#fffffa" d="M270.3 972.2L270.3 945.2L283.8 958.7z"/>
<path fill="#8a6a44" d="M297.4 945.2L324.5 945.2L311.0 958.7z"/>
<path fill="#6e5028" d="M297.4 972.2L297.4 945.2L311.0 958.7z"/>
<path fill="#9a7850" d="M324.5 945.2L351.6 945.2L338.1 958.7z"/>
<path fill="#6e5428" d="M324.5 972.2L324.5 945.2L338.1 958.7z"/>
<path fill="#e0c8c8" d="M351.6 945.2L378.8 945.2L365.2 958.7z"/>
<path fill="#fffffa" d="M351.6 972.2L351.6 945.2L365.2 958.7z"/>
<path fill="#e6e6e6" d="M845.2 579.0L845.2 617.4L826.0 598.2z"/>
<path fill="#e4e4e4" d="M960.4 579.0L960.4 617.4L941.2 598.2z"/>
<path fill="#000000" d="M998.7 579.0L998.7 617.4L979.5 598.2z"/>
<path fill="#2a2a2a" d="M1113.9 617.4L1075.5 617.4L1094.7 598.2z"/>
<path fill="#e4e4e4" d="M1152.3 579.0L1152.3 617.4L1133.1 598.2z"/>
<path fill="#a0a0a0" d="M1152.3 617.4L1113.9 617.4L1133.1 598.2z"/>
<path fill="#aaaaaa" d="M1229.1 579.0L1229.1 617.4L1209.9 598.2z"/>
<path fill="#000000" d="M845.2 655.7L845.2 694.1L826.0 674.9z"/>
<path fill="#000000" d="M845.2 694.1L806.8 694.1L826.0 674.9z"/>
<path fill="#f0f0f0" d="M845.2 655.7L883.6 655.7L864.4 674.9z"/>
<path fill="#f0f0f0" d="M883.6 655.7L883.6 694.1L864.4 674.9z"/>
<path fill="#808080" d="M883.6 694.1L845.2 694.1L864.4 674.9z"/>
<path fill="#ebebeb" d="M883.6 655.7L922.0 655.7L902.8 674.9z"/>
<path fill="#a8a8a8" d="M922.0 694.1L922.0 655.7L941.2 674.9z"/>
<path fill="#c4c4c4" d="M960.3 655.7L998.7 655.7L979.5 674.9z"/>
<path fill="#7a7a7a" d="M998.7 655.7L1037.1 655.7L1017.9 674.9z"/>
<path fill="#707070" d="M998.7 694.1L998.7 655.7L1017.9 674.9z"/>
<path fill="#777777" d="M1075.5 655.7L1113.9 655.7L1094.7 674.9z"/>
<path fill="#808080" d="M1113.9 694.1L1113.9 655.7L1133.1 674.9z"/>
<path fill="#888888" d="M1152.3 655.7L1190.7 655.7L1171.5 674.9z"/>
<path fill="#777777" d="M1190.7 655.7L1229.1 655.7L1209.9 674.9z"/>
<path fill="#6e6e6e" d="M1190.7 694.1L1190.7 655.7L1209.9 674.9z"/>
<path fill="#c8c8c8" d="M1267.5 694.1L1267.5 655.7L1286.7 674.9z"/>
<path fill="#e2e2e2" d="M1382.6 655.7L1421.0 655.7L1401.8 674.9z"/>
<path fill="#f6f6f6" d="M1382.6 694.1L1382.6 655.7L1401.8 674.9z"/>
<path fill="#b4b4b4" d="M845.2 732.5L806.8 732.5L826.0 713.3z"/>
<path fill="#f2f2f2" d="M845.2 694.1L883.6 694.1L864.4 713.3z"/>
<path fill="#f0f0f0" d="M883.6 694.1L883.6 732.5L864.4 713.3z"/>
<path fill="#e4e4e4" d="M883.6 732.5L883.6 694.1L902.8 713.3z"/>
<path fill="#444444" d="M960.3 694.1L998.7 694.1L979.5 713.3z"/>
<path fill="#262626" d="M1190.7 694.1L1229.1 694.1L1209.9 713.3z"/>
<path fill="#0a0a0a" d="M1267.5 694.1L1305.9 694.1L1286.7 713.3z"/>
<path fill="#a0a0a0" d="M1344.2 694.1L1382.6 694.1L1363.4 713.3z"/>
<path fill="#111111" d="M1382.6 694.1L1421.0 694.1L1401.8 713.3z"/>
<path fill="#000000" d="M1382.6 732.5L1382.6 694.1L1401.8 713.3z"/>
<path fill="#c8c8c8" d="M768.4 732.5L806.8 732.5L787.6 751.7z"/>
<path fill="#b4b4b4" d="M806.8 732.5L845.2 732.5L826.0 751.7z"/>
<path fill="#b8b8b8" d="M806.8 770.9L806.8 732.5L826.0 751.7z"/>
<path fill="#b4b4b4" d="M845.2 732.5L883.6 732.5L864.4 751.7z"/>
<path fill="#f0f0f0" d="M883.6 732.5L883.6 770.9L864.4 751.7z"/>
<path fill="#dcdcdc" d="M883.6 770.9L845.2 770.9L864.4 751.7z"/>
<path fill="#b4b4b4" d="M845.2 770.9L845.2 732.5L864.4 751.7z"/>
<path fill="#bcbcbc" d="M883.6 732.5L922.0 732.5L902.8 751.7z"/>
<path fill="#bcbcbc" d="M883.6 770.9L883.6 732.5L902.8 751.7z"/>
<path fill="#bcbcbc" d="M922.0 732.5L960.4 732.5L941.2 751.7z"/>
<path fill="#bcbcbc" d="M922.0 770.9L922.0 732.5L941.2 751.7z"/>
<path fill="#bcbcbc" d="M960.3 732.5L998.7 732.5L979.5 751.7z"/>
<path fill="#bcbcbc" d="M960.3 770.9L960.3 732.5L979.5 751.7z"/>
<path fill="#bcbcbc" d="M998.7 732.5L1037.1 732.5L1017.9 751.7z"/>
<path fill="#bcbcbc" d="M998.7 770.9L998.7 732.5L1017.9 751.7z"/>
<path fill="#bcbcbc" d="M1037.1 732.5L1075.5 732.5L1056.3 751.7z"/>
<path fill="#bcbcbc" d="M1037.1 770.9L1037.1 732.5L1056.3 751.7z"/>
<path fill="#bbbbbb" d="M1075.5 732.5L1113.9 732.5L1094.7 751.7z"/>
<path fill="#f8f8f8" d="M1113.9 732.5L1113.9 770.9L1094.7 751.7z"/>
<path fill="#f8f8f8" d="M1113.9 770.9L1075.5 770.9L1094.7 751.7z"/>
<path fill="#f6f6f6" d="M1075.5 770.9L1075.5 732.5L1094.7 751.7z"/>
<path fill="#bcbcbc" d="M1113.9 732.5L1152.3 732.5L1133.1 751.7z"/>
<path fill="#bcbcbc" d="M1113.9 770.9L1113.9 732.5L1133.1 751.7z"/>
<path fill="#bcbcbc" d="M1152.3 732.5L1190.7 732.5L1171.5 751.7z"/>
<path fill="#bcbcbc" d="M1152.3 770.9L1152.3 732.5L1171.5 751.7z"/>
<path fill="#c0c0c0" d="M1190.7 732.5L1229.1 732.5L1209.9 751.7z"/>
<path fill="#a8a8a8" d="M1229.1 770.9L1190.7 770.9L1209.9 751.7z"/>
<path fill="#c0c0c0" d="M1190.7 770.9L1190.7 732.5L1209.9 751.7z"/>
<path fill="#bcbcbc" d="M1229.1 732.5L1267.5 732.5L1248.3 751.7z"/>
<path fill="#bcbcbc" d="M1229.1 770.9L1229.1 732.5L1248.3 751.7z"/>
<path fill="#bcbcbc" d="M1267.5 732.5L1305.9 732.5L1286.7 751.7z"/>
<path fill="#bcbcbc" d="M1267.5 770.9L1267.5 732.5L1286.7 751.7z"/>
<path fill="#bcbcbc" d="M1305.9 732.5L1344.3 732.5L1325.1 751.7z"/>
<path fill="#bcbcbc" d="M1305.9 770.9L1305.9 732.5L1325.1 751.7z"/>
<path fill="#bcbcbc" d="M1344.2 732.5L1382.6 732.5L1363.4 751.7z"/>
<path fill="#bcbcbc" d="M1344.2 770.9L1344.2 732.5L1363.4 751.7z"/>
<path fill="#bcbcbc" d="M1382.6 732.5L1421.0 732.5L1401.8 751.7z"/>
<path fill="#bcbcbc" d="M1382.6 770.9L1382.6 732.5L1401.8 751.7z"/>
<path fill="#c0c0c0" d="M1421.0 770.9L1421.0 732.5L1440.2 751.7z"/>
<path fill="#f6f6f6" d="M768.4 809.2L806.8 809.2L787.6 828.4z"/>
<path fill="#f6f6f6" d="M806.8 809.2L806.8 847.6L787.6 828.4z"/>
<path fill="#d8d8d8" d="M1113.9 847.6L1075.5 847.6L1094.7 828.4z"/>
<path fill="#d8d8d8" d="M1075.5 847.6L1075.5 809.2L1094.7 828.4z"/>
<path fill="#f8f8f8" d="M768.4 847.6L806.8 847.6L787.6 866.8z"/>
<path fill="#f8f8f8" d="M806.8 847.6L806.8 886.0L787.6 866.8z"/>
<path fill="#e8e8e8" d="M806.8 847.6L845.2 847.6L826.0 866.8z"/>
<path fill="#d0d0d0" d="M883.6 847.6L922.0 847.6L902.8 866.8z"/>
<path fill="#c0c0c0" d="M883.6 886.0L883.6 847.6L902.8 866.8z"/>
<path fill="#8c8c8c" d="M960.3 847.6L998.7 847.6L979.5 866.8z"/>
<path fill="#bcbcbc" d="M960.3 886.0L960.3 847.6L979.5 866.8z"/>
<path fill="#585a54" d="M998.7 847.6L1037.1 847.6L1017.9 866.8z"/>
<path fill="#fafafa" d="M1037.1 847.6L1037.1 886.0L1017.9 866.8z"/>
<path fill="#fafafa" d="M1037.1 886.0L998.7 886.0L1017.9 866.8z"/>
<path fill="#fafafa" d="M998.7 886.0L998.7 847.6L1017.9 866.8z"/>
<path fill="#a8aaa4" d="M1037.1 847.6L1075.5 847.6L1056.3 866.8z"/>
<path fill="#bcbcb8" d="M1037.1 886.0L1037.1 847.6L1056.3 866.8z"/>
<path fill="#cfcfcf" d="M1075.5 847.6L1113.9 847.6L1094.7 866.8z"/>
<path fill="#d4d4d4" d="M1113.9 886.0L1075.5 886.0L1094.7 866.8z"/>
<path fill="#d4d4d4" d="M1075.5 886.0L1075.5 847.6L1094.7 866.8z"/>
<path fill="#a8a8a8" d="M1113.9 847.6L1152.3 847.6L1133.1 866.8z"/>
<path fill="#c0c0c0" d="M1113.9 886.0L1113.9 847.6L1133.1 866.8z"/>
<path fill="#e8e8e8" d="M1152.3 847.6L1190.7 847.6L1171.5 866.8z"/>
<path fill="#adadad" d="M1305.9 847.6L1344.3 847.6L1325.1 866.8z"/>
<path fill="#939393" d="M1305.9 886.0L1305.9 847.6L1325.1 866.8z"/>
<path fill="#b0b0b0" d="M1344.2 886.0L1344.2 847.6L1363.4 866.8z"/>
<path fill="#dcdcdc" d="M1382.6 847.6L1421.0 847.6L1401.8 866.8z"/>
<path fill="#333333" d="M1382.6 886.0L1382.6 847.6L1401.8 866.8z"/>
<path fill="#c4c4c4" d="M845.2 886.0L845.2 924.3L826.0 905.1z"/>
<path fill="#dedede" d="M1113.9 924.3L1075.5 924.3L1094.7 905.1z"/>
<path fill="#e2e2e2" d="M1075.5 924.3L1075.5 886.0L1094.7 905.1z"/>
<path fill="#f2f2f2" d="M1152.3 924.3L1113.9 924.3L1133.1 905.1z"/>
<path fill="#f6f6f6" d="M1421.0 886.0L1421.0 924.3L1401.8 905.1z"/>
<path fill="#dcdcdc" d="M1075.5 962.7L1075.5 924.3L1094.7 943.5z"/></svg><svg style="left:30px;top:43px" width="6" height="20"><circle cx="3" cy="2.7" r="1.6" fill="#111"/><circle cx="3" cy="9" r="1.6" fill="#111"/><circle cx="3" cy="15.3" r="1.6" fill="#111"/></svg><svg style="left:65px;top:43px" width="18" height="18"><rect x="1" y="1" width="16" height="16" rx="2" fill="none" stroke="#161616" stroke-width="1.7"/><path d="M1 6.5h16M6.3 1v5.5M11.7 1v5.5" stroke="#161616" stroke-width="1.7"/></svg><svg style="left:1803px;top:40px" width="120" height="26" fill="none" stroke="#3c3c3c" stroke-width="1.600"><path d="M0 15.5h13"/><rect x="48.5" y="8.5" width="9" height="9" fill="#efefed"/><path d="M51.5 8.5v-3h9v9h-3"/><path d="M97 5.5l10.5 10.5M107.5 5.5L97 16"/></svg><svg style="left:1905px;top:139px" width="9" height="13"><path d="M0 0L9 6.5L0 13z" fill="#1fc8a8"/></svg><svg style="left:73px;top:86px" width="8" height="9"><circle cx="5" cy="5" r="2.6" fill="#ff3a4a"/><path d="M0.5 1.5l3 3" stroke="#e8b0b0" stroke-width="0.8"/></svg><svg style="left:204px;top:242px" width="17" height="17"><path d="M1.1 1.1h14.8v14.8H1.100z" fill="none" stroke="#fbe9df" stroke-width="2.200"/><path d="M1.100 9.400h14.800v6.500H1.100z" fill="#fbe9df"/><path d="M5.400 12h2.400v2.200H5.400zM9.200 12h2.400v2.200H9.200z" fill="#c14a2b"/><path d="M4 2.200h9v5.600H4z" fill="#c9422c"/></svg><svg style="left:238px;top:242px" width="20" height="19" fill="none" stroke="#fbe9df" stroke-width="2.600" stroke-linecap="round" stroke-linejoin="round"><path d="M8 1.500L2 6.500L8.500 10.500"/><path d="M2.5 6.5H12a5.3 5.3 0 0 1 2.5 9.6L11.5 18"/></svg><svg style="left:264px;top:249px" width="8" height="5"><path d="M0.5 0.5h7L4 4.5z" fill="#fbe9df"/></svg><svg style="left:283px;top:242px" width="19" height="19" fill="none" stroke="#fbe9df" stroke-width="2.600" stroke-linecap="round"><path d="M12.800 3.400A7.300 7.300 0 1 0 16 8.600"/><path d="M9.2 1.6h4.4v4.6" stroke-linejoin="round"/></svg><svg style="left:318px;top:241px" width="21" height="20" fill="none" stroke="#fbe9df" stroke-width="1.4"><path d="M0.5 1.2h19.5M2.5 1.5v10.5h8"/><path d="M5 5h5M5 8h3.5M6 18.5h9M10.5 14.5v4"/><circle cx="14.2" cy="9.2" r="4.3"/><path d="M13 7.2v4l3-2z" fill="#fbe9df" stroke="none"/></svg><svg style="left:360px;top:246px" width="8" height="9"><path d="M0.5 0.8h7" stroke="#fbe9df" stroke-width="1.3"/><path d="M0.5 4h7L4 8z" fill="#fbe9df"/></svg><svg style="left:936px;top:280px" width="16" height="21" fill="none" stroke="#fbe9df" stroke-width="1.5"><path d="M5.3 14.5c0-2.4-3.6-3.6-3.6-7.4a6.3 6.3 0 0 1 12.6 0c0 3.8-3.6 5-3.6 7.4z"/><path d="M5.3 17.3h5.4M6 19.8h4"/></svg><svg style="left:1449px;top:240px" width="17" height="17"><path d="M8.5 1L16.3 15.8H0.7z" fill="#ffd23c" stroke="#f8f0d0" stroke-width="1"/><path d="M8.5 5.5v6" stroke="#3a2a10" stroke-width="1.8"/><circle cx="8.5" cy="13.4" r="1" fill="#3a2a10"/></svg><svg style="left:1489px;top:234px" width="31" height="31"><rect width="31" height="31" fill="#a9adb2"/><rect x="0.5" y="0.5" width="30" height="30" fill="none" stroke="#c9cbce"/><circle cx="15.5" cy="11" r="6" fill="#fff"/><path d="M4 30.5c0-9 4.5-12 11.5-12s11.5 3 11.5 12z" fill="#fff"/></svg><svg style="left:1552px;top:243px" width="18" height="14" fill="none" stroke="#fbe0d2" stroke-width="1.4"><rect x="0.7" y="0.7" width="16.6" height="12.6"/><path d="M0.7 3.8h16.6M9 11.5V6M6.3 8.3L9 5.7l2.7 2.6"/></svg><svg style="left:1612px;top:249px" width="14" height="3"><path d="M0 1.5h14" stroke="#fbe0d2" stroke-width="1.6"/></svg><svg style="left:1668px;top:242px" width="15" height="15" fill="none" stroke="#fff" stroke-width="1.5"><rect x="0.8" y="4" width="10" height="10" fill="#ca3a20"/><path d="M4 4V0.8h10v10h-3.2"/></svg><svg style="left:1726px;top:243px" width="14" height="14"><path d="M0.8 0.8l12.4 12.4M13.2 0.8L0.8 13.2" stroke="#fbe0d2" stroke-width="1.5"/></svg><svg style="left:1679px;top:282px" width="20" height="21" fill="none" stroke="#fbe0d2" stroke-width="1.4"><circle cx="9.5" cy="6.5" r="5"/><path d="M1 20c0.8-5 3.6-8 7-8.4M11.5 16.8h7M15 13.3v7"/></svg><svg style="left:0;top:0" width="1920" height="1080" fill="none"><path d="M203 320h38" stroke="#6b6b6b" stroke-width="2.4"/><rect x="207" y="321.5" width="30" height="21" fill="#fbfbfb" stroke="#8a8a8a" stroke-width="1.2"/><path d="M222.0 343v8" stroke="#6b6b6b" stroke-width="2.6"/><path d="M217.0 351h10l4.5 4h-19z" fill="#f4f4f4" stroke="#6b6b6b" stroke-width="1.2"/><path d="M211 326.5h22M211 330h22M211 333.5h18M211 337h16" stroke="#b9b9b9" stroke-width="1.1"/><circle cx="231" cy="337.5" r="8.6" fill="#fdfdfd" stroke="#8a8a8a" stroke-width="1.2"/><path d="M228 332.5v10l8-5z" fill="#4e9c72"/><path d="M283 320h38" stroke="#6b6b6b" stroke-width="2.4"/><rect x="287" y="321.5" width="30" height="21" fill="#fbfbfb" stroke="#8a8a8a" stroke-width="1.2"/><path d="M302.0 343v8" stroke="#6b6b6b" stroke-width="2.6"/><path d="M297.0 351h10l4.5 4h-19z" fill="#f4f4f4" stroke="#6b6b6b" stroke-width="1.2"/><circle cx="296" cy="331" r="4.6" fill="#3d6db5"/><path d="M296 331V326.4A4.6 4.6 0 0 0 292 333.3z" fill="#e0643a"/><path d="M296 331L292 333.3A4.6 4.6 0 0 0 294 335.1z" fill="#f0b040"/><path d="M303.5 327.5h9M303.5 331h9M303.5 334.5h7" stroke="#b9b9b9" stroke-width="1.1"/><path d="M394 320h38" stroke="#6b6b6b" stroke-width="2.4"/><rect x="398" y="321.5" width="30" height="21" fill="#fbfbfb" stroke="#8a8a8a" stroke-width="1.2"/><path d="M413.0 343v8" stroke="#6b6b6b" stroke-width="2.6"/><path d="M408.0 351h10l4.5 4h-19z" fill="#f4f4f4" stroke="#6b6b6b" stroke-width="1.2"/><path d="M402 326.5h22M402 330h22M402 333.5h18M402 337h16" stroke="#b9b9b9" stroke-width="1.1"/><circle cx="421.5" cy="337.5" r="9" fill="#fdfdfd" stroke="#6a8cc0" stroke-width="1.2"/><ellipse cx="421.5" cy="337.5" rx="4" ry="9" stroke="#6a8cc0" stroke-width="1"/><path d="M412.5 337.5h18M414 333h15M414 342h15M421.5 328.500v18" stroke="#6a8cc0" stroke-width="1"/><path d="M491.500 319.500h15v29h-15z" fill="#fbfbfb" stroke="#8a8a8a" stroke-width="1.1"/><path d="M493.500 324h10.500M493.500 344h10.500" stroke="#3d6db5" stroke-width="3"/><path d="M493.500 334h10.500" stroke="#9a9a9a" stroke-width="3"/><path d="M500 329.500h25" stroke="#6b6b6b" stroke-width="2.2"/><rect x="503.500" y="331" width="18.500" height="13" fill="#fbfbfb" stroke="#8a8a8a" stroke-width="1.1"/><path d="M507 335.500h12M507 339h12" stroke="#c0c0c0" stroke-width="1"/><path d="M513 344.500v5" stroke="#6b6b6b" stroke-width="2.2"/><path d="M509 349.500h8l3.500 3.500h-15z" fill="#f4f4f4" stroke="#6b6b6b" stroke-width="1.100"/><path d="M595.500 319.500h14l7 7v21h-21z" fill="#fbfbfb" stroke="#9a9a9a" stroke-width="1.1"/><path d="M609.500 319.500v7h7" stroke="#9a9a9a" stroke-width="1.1"/><circle cx="600" cy="331" r="1.500" fill="#8a8a8a"/><circle cx="600" cy="337.500" r="1.500" stroke="#9a9a9a" stroke-width=".8"/><circle cx="600" cy="344" r="1.500" stroke="#9a9a9a" stroke-width=".8"/><path d="M603 331h4M603 337.500h4M603 344h4" stroke="#bdbdbd"/><path d="M607 329.500h25.500" stroke="#6b6b6b" stroke-width="2.2"/><rect x="610.500" y="331" width="18.500" height="13" fill="#fbfbfb" stroke="#8a8a8a" stroke-width="1.1"/><circle cx="616.500" cy="337.500" r="3.200" fill="#3d6db5"/><path d="M616.500 337.500v-3.200a3.200 3.200 0 0 0 -2.800 4.800z" fill="#d8593a"/><path d="M622 335.500h5M622 339h5" stroke="#c0c0c0" stroke-width="1"/><path d="M619.500 344.500v5" stroke="#6b6b6b" stroke-width="2.2"/><path d="M615.500 349.500h8l3.500 3.500h-15z" fill="#f4f4f4" stroke="#6b6b6b" stroke-width="1.100"/><rect x="670.500" y="321.500" width="34" height="27" fill="#fbfbfb" stroke="#8a8a8a" stroke-width="1.1" stroke-dasharray="1.5 1.5"/><path d="M681 345.500h23.500v-20" stroke="#9a9a9a" stroke-width="1.2"/><circle cx="693" cy="335" r="4.300" fill="#3d6db5"/><path d="M693 335l-3.500-2.500a4.300 4.300 0 0 1 3.500-1.800z" fill="#f0b040"/><path d="M669 349.500L706 320.500" stroke="#5a5a5a" stroke-width="1.800"/><rect x="739.500" y="319.500" width="33" height="26" rx="1" fill="#fbfbfb" stroke="#9a9a9a" stroke-width="1.2"/><rect x="743.500" y="323.500" width="25" height="14" fill="#fff" stroke="#9a9a9a" stroke-width="1.1"/><circle cx="765.500" cy="345" r="9.300" fill="#fdfdfd" stroke="#8aa0c4" stroke-width="1.2"/><path d="M765.500 338.500v7h5.500" stroke="#7a7a7a" stroke-width="1.2"/><path d="M762.500 333h6" stroke="#6b6b6b" stroke-width="2"/><rect x="807" y="319.500" width="33.500" height="26.500" rx="1" fill="#fbfbfb" stroke="#9a9a9a" stroke-width="1.2"/><rect x="811" y="323.500" width="25.500" height="14.500" fill="#fff" stroke="#9a9a9a" stroke-width="1.1"/><circle cx="835.700" cy="347.700" r="7.800" fill="#fdfdfd" stroke="#d4d4d4" stroke-width="1"/><circle cx="835.700" cy="347.700" r="4.800" fill="#d8593a"/><rect x="1058.500" y="328.500" width="12" height="10" fill="#e8eef8" stroke="#7a7a7a" stroke-width="1"/><rect x="1060.500" y="330.500" width="8" height="4" fill="#3d6db5"/><rect x="1052.500" y="333.500" width="13.500" height="11" fill="#eef2fa" stroke="#7a7a7a" stroke-width="1"/><rect x="1054.500" y="335.500" width="9.500" height="4" fill="#3d6db5"/><path d="M1055 342h8" stroke="#9a9a9a"/></svg><svg style="left:0;top:0" width="1920" height="1080" fill="none"><rect x="47.800" y="1008.800" width="21" height="18.400" rx="3.200" fill="#fff"/><path d="M68 1015.500l7.300-5.300a0.800 0.800 0 0 1 1.300 0.600v14.400a0.800 0.800 0 0 1 -1.300 0.600l-7.300-5.300z" fill="#fff"/><path d="M80 1042.500l4 4l4-4" stroke="#e0e0e0" stroke-width="1.500"/><path d="M169.500 1042.500l4 4l4-4" stroke="#e0e0e0" stroke-width="1.500"/><rect x="144" y="1003.800" width="9" height="17" rx="4.500" fill="#fff"/><path d="M140.500 1015v1.500a8 8 0 0 0 16 0V1015" stroke="#fff" stroke-width="1.800"/><path d="M148.500 1025v5M142.500 1030.800h12" stroke="#fff" stroke-width="1.800"/><path d="M137.500 1005.500L161.500 1029.500" stroke="#d0202c" stroke-width="2.200"/><rect x="874.500" y="1002" width="28.500" height="20" rx="2.500" fill="#6f7074"/><path d="M885.500 1007v10l8-5z" fill="#1c1c1e"/><path d="M882.500 1027h5" stroke="#6f7074" stroke-width="2"/><path d="M886.500 1017.500v15.500l3.600-3.400l2.600 5.800l2.400-1.100l-2.600-5.600h5z" fill="#fff" stroke="#111" stroke-width="1"/><path d="M961.500 1002h20a4 4 0 0 1 4 4v22.500l-6.500-6.500h-17.500a4 4 0 0 1 -4-4v-12a4 4 0 0 1 4-4z" fill="#fff"/><circle cx="966" cy="1012.500" r="1.500" fill="#222"/><circle cx="971.500" cy="1012.500" r="1.500" fill="#222"/><circle cx="977" cy="1012.500" r="1.500" fill="#222"/><circle cx="1054" cy="1008.500" r="6.500" fill="#fff"/><path d="M1040.500 1028.500c0-8 5-11.500 13.500-11.500s13.500 3.500 13.500 11.500z" fill="#fff"/><circle cx="1137" cy="1015.500" r="14.800" fill="#f7b731"/><path d="M1127 1016.500h20a10 10 0 0 1 -20 0z" fill="#6b2a10"/><path d="M1128.500 1017h17v3h-17z" fill="#fff"/><path d="M1128.500 1010.500q3-3.500 6 0M1139.500 1010.500q3-3.500 6 0" stroke="#6b2a10" stroke-width="1.600"/><rect x="1871.500" y="1004" width="14.500" height="19" rx="1.500" stroke="#ff4d4f" stroke-width="1.800"/><path d="M1866.500 1004.800a2 2 0 0 1 2.400-2l6.500 1.800a2 2 0 0 1 1.500 2v19a2 2 0 0 1 -2.600 1.900l-6.400-2.200a2 2 0 0 1 -1.400-1.900z" fill="#ff4d4f"/></svg><span class="t" id="wt" style="left:842.6px;top:45.7px;font-size:16.5px;line-height:16.5px;color:#2a3f55;letter-spacing:0.02px;">교생 실습 평가회 &amp; 상반기 정기 총회</span>
<span class="t" id="pt1" style="left:828.5px;top:243.3px;font-size:15.5px;line-height:15.5px;color:#f6cdb8;letter-spacing:0.53px;">실습평가회 ppt 경산유치원</span>
<span class="t" id="pt2" style="left:1019.9px;top:243.3px;font-size:15.5px;line-height:15.5px;color:#f6cdb8;">-</span>
<span class="t" id="pt3" style="left:1035.4px;top:243.5px;font-size:15px;line-height:15px;color:#f6cdb8;letter-spacing:-0.16px;">PowerPoint</span>
<span class="t" id="tb1" style="left:200.0px;top:283.1px;font-size:16px;line-height:16px;color:#fbe6d8;letter-spacing:-0.45px;">파일</span>
<span class="t" id="tb2" style="left:268.1px;top:283.1px;font-size:16px;line-height:16px;color:#fbe6d8;">홈</span>
<span class="t" id="tb3" style="left:316.0px;top:283.1px;font-size:16px;line-height:16px;color:#fbe6d8;letter-spacing:-0.45px;">삽입</span>
<span class="t" id="tb4" style="left:377.9px;top:283.1px;font-size:16px;line-height:16px;color:#fbe6d8;letter-spacing:-0.50px;">디자인</span>
<span class="t" id="tb5" style="left:454.0px;top:283.1px;font-size:16px;line-height:16px;color:#fbe6d8;letter-spacing:-0.45px;">전환</span>
<span class="t" id="tb6" style="left:516.5px;top:283.1px;font-size:16px;line-height:16px;color:#fbe6d8;letter-spacing:-0.28px;">애니메이션</span>
<span class="t" id="tb7" style="left:622.0px;top:283.1px;font-size:16px;line-height:16px;color:#b5533a;letter-spacing:0.13px;">슬라이드 쇼</span>
<span class="t" id="tb8" style="left:733.5px;top:283.1px;font-size:16px;line-height:16px;color:#fbe6d8;letter-spacing:-0.50px;">검토</span>
<span class="t" id="tb9" style="left:795.2px;top:283.1px;font-size:16px;line-height:16px;color:#fbe6d8;letter-spacing:-0.50px;">보기</span>
<span class="t" id="tb10" style="left:857.0px;top:283.1px;font-size:16px;line-height:16px;color:#fbe6d8;letter-spacing:-0.19px;">도움말</span>
<span class="t" id="tb11" style="left:969.0px;top:283.1px;font-size:16px;line-height:16px;color:#fbe6d8;letter-spacing:-0.12px;">어떤 작업을 원하시나요?</span>
<span class="t" id="tb12" style="left:1706.0px;top:284.8px;font-size:15.5px;line-height:15.5px;color:#fbe6d8;letter-spacing:-0.50px;">공유</span>
<span class="t" id="r1" style="left:192.0px;top:361.6px;font-size:15.5px;line-height:15.5px;color:#444444;letter-spacing:-0.02px;">처음부터</span>
<span class="t" id="r2" style="left:286.5px;top:361.6px;font-size:15.5px;line-height:15.5px;color:#444444;letter-spacing:-0.03px;">현재</span>
<span class="t" id="r3" style="left:257.0px;top:381.6px;font-size:15.5px;line-height:15.5px;color:#444444;letter-spacing:0.29px;">슬라이드부터</span>
<span class="t" id="r4" style="left:390.0px;top:361.6px;font-size:15.5px;line-height:15.5px;color:#444444;letter-spacing:0.11px;">온라인</span>
<span class="t" id="r5" style="left:362.0px;top:381.6px;font-size:15.5px;line-height:15.5px;color:#444444;letter-spacing:0.29px;">프레젠테이션</span>
<span class="t" id="r6" style="left:468.7px;top:361.6px;font-size:15.5px;line-height:15.5px;color:#444444;letter-spacing:0.34px;">슬라이드 쇼</span>
<span class="t" id="r7" style="left:480.7px;top:381.6px;font-size:15.5px;line-height:15.5px;color:#444444;letter-spacing:-0.24px;">재구성</span>
<span class="t" id="r8" style="left:573.0px;top:361.6px;font-size:15.5px;line-height:15.5px;color:#444444;letter-spacing:0.42px;">슬라이드 쇼</span>
<span class="t" id="r9" style="left:597.8px;top:381.6px;font-size:15.5px;line-height:15.5px;color:#444444;letter-spacing:-0.50px;">설정</span>
<span class="t" id="r10" style="left:658.0px;top:361.6px;font-size:15.5px;line-height:15.5px;color:#444444;letter-spacing:0.22px;">슬라이드</span>
<span class="t" id="r11" style="left:665.7px;top:381.6px;font-size:15.5px;line-height:15.5px;color:#444444;letter-spacing:-0.24px;">숨기기</span>
<span class="t" id="r12" style="left:742.0px;top:361.6px;font-size:15.5px;line-height:15.5px;color:#444444;letter-spacing:-0.50px;">예행</span>
<span class="t" id="r13" style="left:742.0px;top:381.6px;font-size:15.5px;line-height:15.5px;color:#444444;letter-spacing:-0.50px;">연습</span>
<span class="t" id="r14" style="left:784.8px;top:361.6px;font-size:15.5px;line-height:15.5px;color:#444444;letter-spacing:0.38px;">슬라이드 쇼</span>
<span class="t" id="r15" style="left:803.7px;top:381.6px;font-size:15.5px;line-height:15.5px;color:#444444;letter-spacing:-0.50px;">녹화</span>
<span class="t" id="g1" style="left:311.5px;top:406.6px;font-size:15.5px;line-height:15.5px;color:#444444;letter-spacing:0.51px;">슬라이드 쇼 시작</span>
<span class="t" id="g2" style="left:784.3px;top:406.6px;font-size:15.5px;line-height:15.5px;color:#444444;letter-spacing:-0.50px;">설정</span>
<span class="t" id="g3" style="left:1163.3px;top:406.6px;font-size:15.5px;line-height:15.5px;color:#444444;letter-spacing:-0.14px;">모니터</span>
<span class="t" id="c1" style="left:894.0px;top:319.6px;font-size:15.5px;line-height:15.5px;color:#444444;letter-spacing:0.16px;">설명 재생</span>
<span class="t" id="c2" style="left:894.0px;top:348.8px;font-size:15.5px;line-height:15.5px;color:#444444;letter-spacing:0.16px;">시간 사용</span>
<span class="t" id="c3" style="left:894.0px;top:377.8px;font-size:15.5px;line-height:15.5px;color:#444444;letter-spacing:0.44px;">미디어 컨트롤 표시</span>
<span class="t" id="m1" style="left:1075.0px;top:330.8px;font-size:15.5px;line-height:15.5px;color:#444444;letter-spacing:-0.05px;">모니터(M):</span>
<span class="t" id="m2" style="left:1153.3px;top:329.5px;font-size:15.5px;line-height:15.5px;color:#444444;letter-spacing:0.38px;">기본 모니터</span>
<span class="t" id="m3" style="left:1075.3px;top:369.1px;font-size:15.5px;line-height:15.5px;color:#444444;letter-spacing:0.47px;">발표자 보기 사용</span>
<span class="t" id="n1" style="left:193.1px;top:447.1px;font-size:18px;line-height:18px;color:#3a3a3a;">1</span>
<span class="t" id="n2" style="left:193.2px;top:557.1px;font-size:18px;line-height:18px;color:#3a3a3a;">2</span>
<span class="t" id="n3" style="left:193.2px;top:666.6px;font-size:18px;line-height:18px;color:#c0504d;">3</span>
<span class="t" id="n4" style="left:193.5px;top:776.6px;font-size:18px;line-height:18px;color:#3a3a3a;">4</span>
<span class="t" id="n5" style="left:193.2px;top:886.1px;font-size:18px;line-height:18px;color:#3a3a3a;">5</span>
<span class="t" id="s2" style="left:669.8px;top:605.9px;font-size:27.5px;line-height:27.5px;color:#111;font-weight:700;letter-spacing:-0.20px;">교원체제</span>
<span class="t" id="s3" style="left:669.8px;top:655.4px;font-size:26px;line-height:26px;color:#1a1a1a;letter-spacing:-0.50px;">학급구성</span>
<span class="t" id="s4" style="left:669.8px;top:795.4px;font-size:26px;line-height:26px;color:#1a1a1a;letter-spacing:-0.50px;">시설현황</span>
<span class="t" id="b1" style="left:29.6px;top:1038.8px;font-size:15.5px;line-height:15.5px;color:#e4e4e4;letter-spacing:0.21px;">카메라</span>
<span class="t" id="b2" style="left:119.0px;top:1038.8px;font-size:15.5px;line-height:15.5px;color:#e4e4e4;letter-spacing:0.11px;">마이크</span>
<span class="t" id="b3" style="left:859.5px;top:1038.3px;font-size:15.5px;line-height:15.5px;color:#e4e4e4;letter-spacing:0.48px;">화면공유</span>
<span class="t" id="b4" style="left:957.0px;top:1038.3px;font-size:15.5px;line-height:15.5px;color:#e4e4e4;letter-spacing:-0.03px;">채팅</span>
<span class="t" id="b5" style="left:1032.0px;top:1038.3px;font-size:15.5px;line-height:15.5px;color:#e4e4e4;letter-spacing:0.60px;">참가자</span>
<span class="t" id="b6" style="left:1115.0px;top:1038.3px;font-size:15.5px;line-height:15.5px;color:#e4e4e4;letter-spacing:-0.14px;">리액션</span>
<span class="t" id="b7" style="left:1855.0px;top:1037.8px;font-size:15.5px;line-height:15.5px;color:#e4e4e4;letter-spacing:0.11px;">나가기</span>
<span class="t" id="b8" style="left:1069.5px;top:1005.5px;font-size:14px;line-height:14px;color:#cfcfcf;letter-spacing:-0.08px;">85</span>
<span class="t" id="th1" style="left:274.0px;top:472.6px;font-size:9.5px;line-height:9.5px;color:#fff;font-weight:700;letter-spacing:-0.27px;">경산 유치원</span>
<span class="t" id="th2" style="left:234.5px;top:572.7px;font-size:8.5px;line-height:8.5px;color:#8a6f74;letter-spacing:0.36px;">목차</span>
</body></html>
